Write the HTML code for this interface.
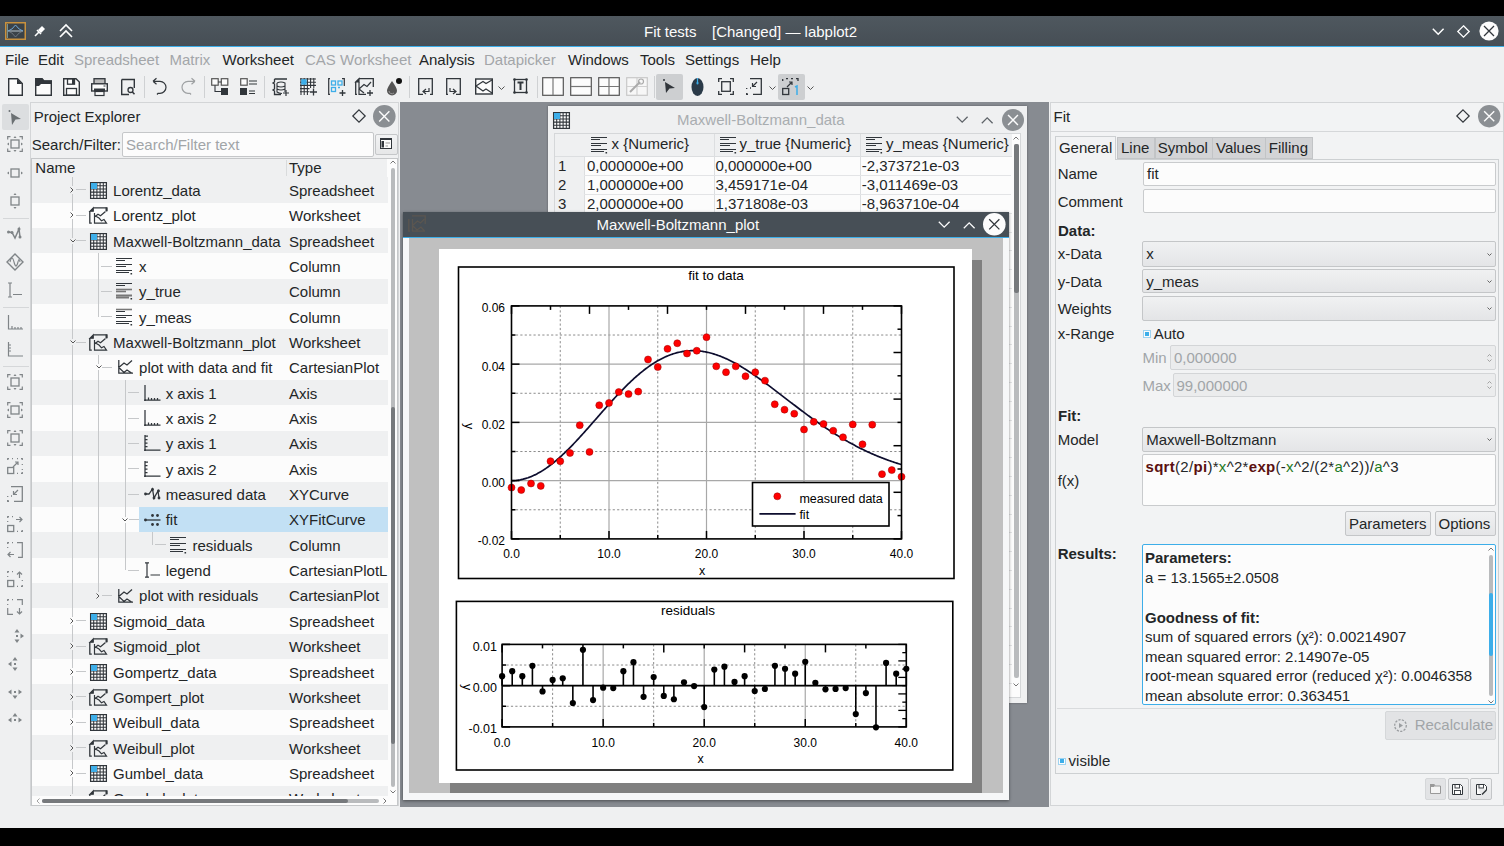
<!DOCTYPE html><html><head><meta charset="utf-8"><style>
html,body{margin:0;padding:0;}
body{width:1504px;height:846px;overflow:hidden;position:relative;background:#eff0f1;font-family:"Liberation Sans", sans-serif;}
.a{position:absolute;}
.t{position:absolute;white-space:pre;line-height:1;}
svg{overflow:visible;}
</style></head><body>
<div class="a" style="left:0px;top:0px;width:1504px;height:16px;background:#000;"></div>
<div class="a" style="left:0px;top:828px;width:1504px;height:18px;background:#000;"></div>
<div class="a" style="left:0px;top:16px;width:1504px;height:30px;background:linear-gradient(#4f585f,#464e55);"></div>
<div class="a" style="left:0px;top:46px;width:1504px;height:1px;background:#3daee9;"></div>
<svg class="a" style="left:5px;top:22px;" width="21" height="18" viewBox="0 0 21 18"><rect x="0.75" y="0.75" width="19.5" height="16.5" fill="#3a4248" stroke="#c9913d" stroke-width="1.5"/>
<path d="M3 9 H18" stroke="#b8c4cc" stroke-width="1"/>
<path d="M3 9 Q7 8 10.5 3 Q14 8 18 9" stroke="#6fa8d8" fill="none" stroke-width="1"/>
<path d="M3 9 Q7 10 10.5 15 Q14 10 18 9" stroke="#78808a" fill="none" stroke-width="0.8"/>
<path d="M2.5 2 V16" stroke="#8aa" stroke-width="0.8"/></svg>
<svg class="a" style="left:34px;top:25px;" width="12" height="12" viewBox="0 0 12 12"><path d="M1 11 L5 7" stroke="#fff" stroke-width="1.6"/><path d="M4 5 L7 8 L11 4 L8 1 Z" fill="#fff"/><path d="M3 5 L7 9" stroke="#fff" stroke-width="1.6"/></svg>
<svg class="a" style="left:59px;top:24px;" width="14" height="14" viewBox="0 0 14 14"><path d="M1 7 L7 1 L13 7 M1 13 L7 7 L13 13" stroke="#fff" stroke-width="1.6" fill="none"/></svg>
<div class="t" style="top:24.00px;font-size:15px;color:#fcfcfc;left:644px;">Fit tests</div>
<div class="t" style="top:24.00px;font-size:15px;color:#fcfcfc;left:712px;">[Changed] — labplot2</div>
<svg class="a" style="left:1432px;top:28px;" width="13" height="8" viewBox="0 0 13 8"><path d="M0.8 0.8 L6.2 6.2 L11.6 0.8" stroke="#fff" stroke-width="1.5" fill="none"/></svg>
<svg class="a" style="left:1457px;top:25px;" width="13" height="13" viewBox="0 0 13 13"><path d="M6.5 0.8 L12.2 6.5 L6.5 12.2 L0.8 6.5 Z" stroke="#fff" stroke-width="1.3" fill="none"/></svg>
<svg class="a" style="left:1479px;top:21px;" width="20" height="20" viewBox="0 0 20 20"><circle cx="10" cy="10" r="9.6" fill="#fcfcfc"/><path d="M5 5 L15 15 M15 5 L5 15" stroke="#31363b" stroke-width="1.3"/></svg>
<div class="t" style="top:51.90px;font-size:15px;color:#232627;left:5px;">File</div>
<div class="t" style="top:51.90px;font-size:15px;color:#232627;left:38px;">Edit</div>
<div class="t" style="top:51.90px;font-size:15px;color:#a3a6a9;left:74px;">Spreadsheet</div>
<div class="t" style="top:51.90px;font-size:15px;color:#a3a6a9;left:169.5px;">Matrix</div>
<div class="t" style="top:51.90px;font-size:15px;color:#232627;left:222.5px;">Worksheet</div>
<div class="t" style="top:51.90px;font-size:15px;color:#a3a6a9;left:305px;">CAS Worksheet</div>
<div class="t" style="top:51.90px;font-size:15px;color:#232627;left:419px;">Analysis</div>
<div class="t" style="top:51.90px;font-size:15px;color:#a3a6a9;left:484px;">Datapicker</div>
<div class="t" style="top:51.90px;font-size:15px;color:#232627;left:568px;">Windows</div>
<div class="t" style="top:51.90px;font-size:15px;color:#232627;left:640px;">Tools</div>
<div class="t" style="top:51.90px;font-size:15px;color:#232627;left:685px;">Settings</div>
<div class="t" style="top:51.90px;font-size:15px;color:#232627;left:750px;">Help</div>
<svg class="a" style="left:8px;top:78px;" width="15" height="18" viewBox="0 0 15 18"><path d="M0.7 0.7 H9.5 L14.3 5.5 V17.3 H0.7 Z" fill="#fcfcfc" stroke="#31363b" stroke-width="1.4"/><path d="M9 0.7 L14.3 6 H9 Z" fill="#31363b"/></svg>
<svg class="a" style="left:35px;top:78px;" width="17" height="18" viewBox="0 0 17 18"><path d="M0.7 17.3 V0.7 H7 L9 3 H16.3 V17.3 Z" fill="#fcfcfc" stroke="#31363b" stroke-width="1.4"/><path d="M0 0 H7 L9 2.5 H17 V6 H6 L4 8 H0 Z" fill="#31363b"/></svg>
<svg class="a" style="left:63px;top:78px;" width="17" height="18" viewBox="0 0 17 18"><path d="M0.7 0.7 H13 L16.3 4 V17.3 H0.7 Z" fill="#fcfcfc" stroke="#31363b" stroke-width="1.4"/><rect x="4.5" y="0.7" width="7" height="5.5" fill="none" stroke="#31363b" stroke-width="1.3"/><rect x="9" y="1" width="2.5" height="5" fill="#31363b"/><rect x="3.5" y="10.5" width="10" height="6.8" fill="none" stroke="#31363b" stroke-width="1.3"/></svg>
<svg class="a" style="left:91px;top:78px;" width="17" height="18" viewBox="0 0 17 18"><rect x="3" y="0.7" width="11" height="5.5" fill="#bbb" stroke="#31363b" stroke-width="1.3"/><rect x="0.7" y="5.8" width="15.6" height="7.2" fill="#fcfcfc" stroke="#31363b" stroke-width="1.4"/><rect x="3" y="10.5" width="11" height="3" fill="#31363b"/><rect x="4" y="13.5" width="9" height="4" fill="#fcfcfc" stroke="#31363b" stroke-width="1.2"/><rect x="12.5" y="7.5" width="2" height="1" fill="#31363b"/></svg>
<svg class="a" style="left:121px;top:78px;" width="14" height="18" viewBox="0 0 14 18"><path d="M0.7 1.5 H13.3 V10 M0.7 1.5 V16.5 H8" fill="none" stroke="#31363b" stroke-width="1.4"/><circle cx="9.5" cy="12" r="2.5" fill="none" stroke="#31363b" stroke-width="1.3"/><path d="M11.2 13.8 L13.5 16.3" stroke="#31363b" stroke-width="1.5"/></svg>
<div class="a" style="left:144px;top:76px;width:1px;height:22px;background:#cfd1d3;"></div>
<svg class="a" style="left:152px;top:78px;" width="16" height="18" viewBox="0 0 16 18"><path d="M1 3.3 L4.5 0.3 M1 3.3 L4.5 6.3 M1 3.3 H8 A6 6 0 0 1 8 15.3 H6 L5 16.5" fill="none" stroke="#31363b" stroke-width="1.2"/></svg>
<svg class="a" style="left:180px;top:78px;" width="16" height="18" viewBox="0 0 16 18"><path d="M15 3.3 L11.5 0.3 M15 3.3 L11.5 6.3 M15 3.3 H8 A6 6 0 0 0 8 15.3 H10 L11 16.5" fill="none" stroke="#9ea1a3" stroke-width="1.2"/></svg>
<div class="a" style="left:204px;top:76px;width:1px;height:22px;background:#cfd1d3;"></div>
<svg class="a" style="left:211px;top:78px;" width="18" height="17" viewBox="0 0 18 17"><rect x="0.7" y="0.7" width="6.5" height="6.5" fill="#fcfcfc" stroke="#555" stroke-width="1.2"/><rect x="10.3" y="0.7" width="6.5" height="6.5" fill="#fcfcfc" stroke="#555" stroke-width="1.2"/><path d="M7.2 4 H10.3 M4 7.2 V13.5 H10" stroke="#31363b" stroke-width="1.1" fill="none"/><rect x="10" y="10" width="7" height="7" fill="#31363b"/></svg>
<svg class="a" style="left:240px;top:78px;" width="17" height="17" viewBox="0 0 17 17"><rect x="0.7" y="0.7" width="6.5" height="6.5" fill="#fcfcfc" stroke="#555" stroke-width="1.2"/><path d="M9 3 H17 M9 6 H17 M9 13 H15 M9 15.5 H15" stroke="#31363b" stroke-width="1.1"/><rect x="0" y="10" width="7" height="7" fill="#31363b"/></svg>
<div class="a" style="left:264px;top:76px;width:1px;height:22px;background:#cfd1d3;"></div>
<svg class="a" style="left:272px;top:78px;" width="18" height="18" viewBox="0 0 18 18"><path d="M2.5 1 H15 M2.5 1 V4 L1 5 L2.5 6 V11 L1 12 L2.5 13 V16.5 H9" fill="none" stroke="#31363b" stroke-width="1.3"/><path d="M5 5 Q9 3 13 5 V14 M5 5 V14 Q7 15.5 10 15.5 M5 8 Q9 10 13 8 M5 11 Q9 13 13 11" fill="none" stroke="#31363b" stroke-width="1.1"/><path d="M14 12 V18 M11 15 H17" stroke="#31363b" stroke-width="1.2"/></svg>
<svg class="a" style="left:300px;top:78px;" width="17" height="18" viewBox="0 0 17 18"><rect x="0.5" y="0.5" width="15" height="15.5" fill="#fcfcfc"/><path d="M1.0 0 V17 M0 1.0 H16" stroke="#31363b" stroke-width="1.1"/><path d="M4.2 0 V17 M0 4.2 H16" stroke="#31363b" stroke-width="1.1"/><path d="M7.4 0 V17 M0 7.4 H16" stroke="#31363b" stroke-width="1.1"/><path d="M10.600000000000001 0 V17 M0 10.600000000000001 H16" stroke="#31363b" stroke-width="1.1"/><path d="M13.8 0 V17 M0 13.8 H16" stroke="#31363b" stroke-width="1.1"/><rect x="1.2" y="1.2" width="5.5" height="5.5" fill="#3daee9"/><rect x="9.5" y="10" width="8" height="8" fill="#eff0f1"/><path d="M13.5 10.5 V17.5 M10 14 H17" stroke="#31363b" stroke-width="1.3"/></svg>
<svg class="a" style="left:328px;top:78px;" width="18" height="18" viewBox="0 0 18 18"><path d="M2 0.7 H0.7 V16.3 H2 M14 0.7 H16.3 V8" fill="none" stroke="#31363b" stroke-width="1.2"/><rect x="3.5" y="3" width="4" height="4" fill="none" stroke="#3daee9" stroke-width="1.3"/><rect x="10" y="3" width="4" height="4" fill="none" stroke="#3daee9" stroke-width="1.3"/><rect x="3.5" y="9.5" width="4" height="4" fill="none" stroke="#3daee9" stroke-width="1.3"/><path d="M10 9.5 H12" stroke="#3daee9" stroke-width="1.3"/><path d="M14.5 12 V18 M11.5 15 H17.5" stroke="#31363b" stroke-width="1.3"/></svg>
<svg class="a" style="left:355px;top:78px;" width="19" height="18" viewBox="0 0 19 18"><path d="M4 0.7 H18.3 V9 M0.7 4 V16.3 H2" fill="none" stroke="#31363b" stroke-width="1.3"/><path d="M0.7 4 L4 0.7 V4 Z" fill="#31363b" stroke="#31363b" stroke-width="1.2"/><path d="M4 4 V16.3 H11 M4 11 L9 6.5 L12 8.5 L16 4" fill="none" stroke="#31363b" stroke-width="1.2"/><path d="M4 11 L9 15" stroke="#31363b" stroke-width="1.2"/><path d="M15 12 V18 M12 15 H18" stroke="#31363b" stroke-width="1.3"/></svg>
<svg class="a" style="left:386px;top:78px;" width="17" height="18" viewBox="0 0 17 18"><path d="M6 3 Q1 10 1 12.5 A5 5 0 0 0 11 12.5 Q11 10 6 3 Z" fill="#555"/><path d="M3 13 A3 3 0 0 0 8 15" stroke="#999" stroke-width="1" fill="none"/><circle cx="13" cy="3" r="3" fill="#111"/></svg>
<div class="a" style="left:409px;top:76px;width:1px;height:22px;background:#cfd1d3;"></div>
<svg class="a" style="left:418px;top:78px;" width="15" height="17" viewBox="0 0 15 17"><path d="M5 16.3 H0.7 V0.7 H14.3 V13 M14.3 13 V16.3 H12" fill="none" stroke="#31363b" stroke-width="1.3"/><path d="M11 10 V13.5 H5.5 M8 11 L5 13.5 L8 16" fill="none" stroke="#31363b" stroke-width="1.2"/></svg>
<svg class="a" style="left:446px;top:78px;" width="15" height="17" viewBox="0 0 15 17"><path d="M10 16.3 H14.3 V0.7 H0.7 V16.3 H2" fill="none" stroke="#31363b" stroke-width="1.3"/><path d="M4 10 V13.5 H9.5 M7 11 L10 13.5 L7 16" fill="none" stroke="#31363b" stroke-width="1.2"/></svg>
<svg class="a" style="left:475px;top:78px;" width="18" height="17" viewBox="0 0 18 17"><rect x="0.7" y="1" width="16.6" height="15" fill="#fcfcfc" stroke="#31363b" stroke-width="1.4"/><path d="M1 8 L8 3.5 L11 5.5 L17 2 M1 8 L8 13 L11 11 L17 15" fill="none" stroke="#31363b" stroke-width="1.2"/></svg>
<svg class="a" style="left:498px;top:86px;" width="7" height="4" viewBox="0 0 7 4"><path d="M0.5 0.5 L3.5 3.5 L6.5 0.5" fill="none" stroke="#555" stroke-width="1"/></svg>
<svg class="a" style="left:513px;top:78px;" width="15" height="17" viewBox="0 0 15 17"><rect x="1.5" y="1.5" width="12" height="13" fill="none" stroke="#31363b" stroke-width="1.3"/><circle cx="1.5" cy="1.5" r="1.3" fill="#31363b"/><circle cx="13.5" cy="1.5" r="1.3" fill="#31363b"/><circle cx="1.5" cy="14.5" r="1.3" fill="#31363b"/><circle cx="13.5" cy="14.5" r="1.3" fill="#31363b"/><path d="M4.5 4.5 H10.5 M7.5 4.5 V12" stroke="#31363b" stroke-width="2"/></svg>
<div class="a" style="left:537px;top:76px;width:1px;height:22px;background:#cfd1d3;"></div>
<svg class="a" style="left:542px;top:77px;" width="22" height="19" viewBox="0 0 22 19"><rect x="0.7" y="0.7" width="20.6" height="17.6" fill="#fcfcfc" stroke="#555" stroke-width="1.2"/><path d="M11 1 V18" stroke="#777" stroke-width="1.2"/></svg>
<svg class="a" style="left:570px;top:77px;" width="22" height="19" viewBox="0 0 22 19"><rect x="0.7" y="0.7" width="20.6" height="17.6" fill="#fcfcfc" stroke="#555" stroke-width="1.2"/><path d="M1 9.5 H21" stroke="#777" stroke-width="1.2"/></svg>
<svg class="a" style="left:598px;top:77px;" width="22" height="19" viewBox="0 0 22 19"><rect x="0.7" y="0.7" width="20.6" height="17.6" fill="#fcfcfc" stroke="#555" stroke-width="1.2"/><path d="M1 9.5 H21 M11 1 V18" stroke="#777" stroke-width="1.2"/></svg>
<svg class="a" style="left:626px;top:77px;" width="22" height="19" viewBox="0 0 22 19"><rect x="0.7" y="0.7" width="20.6" height="17.6" fill="#f7f7f7" stroke="#c8c8c8" stroke-width="1.2"/><path d="M1 9.5 H21 M11 1 V18" stroke="#d0d0d0" stroke-width="1.2"/><path d="M4 15 L14 5" stroke="#aaa" stroke-width="2"/><circle cx="15" cy="4.5" r="2.5" fill="none" stroke="#aaa" stroke-width="1.2"/></svg>
<div class="a" style="left:654px;top:76px;width:1px;height:22px;background:#cfd1d3;"></div>
<div class="a" style="left:656px;top:73.5px;width:27px;height:26.5px;background:#cdcfd1;border-radius:2px;"></div>
<svg class="a" style="left:663px;top:79px;" width="13" height="15" viewBox="0 0 13 15"><path d="M2 3 L12 9 L6.5 9.5 L3 14 Z" fill="#31363b"/><circle cx="1" cy="1" r="1" fill="#31363b"/></svg>
<svg class="a" style="left:691px;top:77px;" width="13" height="20" viewBox="0 0 13 20"><ellipse cx="6.5" cy="10" rx="6" ry="9" fill="#2a3a48"/><path d="M6.5 1 V7" stroke="#3daee9" stroke-width="1.2"/><ellipse cx="6.5" cy="6" rx="1" ry="1.6" fill="#3daee9"/></svg>
<svg class="a" style="left:718px;top:78px;" width="16" height="17" viewBox="0 0 16 17"><path d="M0.7 4 V0.7 H4 M12 0.7 H15.3 V4 M15.3 13 V16.3 H12 M4 16.3 H0.7 V13" fill="none" stroke="#31363b" stroke-width="1.3"/><rect x="3.7" y="3.7" width="8.6" height="9.6" fill="none" stroke="#31363b" stroke-width="1.3"/></svg>
<svg class="a" style="left:746px;top:78px;" width="16" height="17" viewBox="0 0 16 17"><path d="M4 0.7 H15.3 V16.3 H7" fill="none" stroke="#31363b" stroke-width="1.3"/><path d="M0.7 10 V11 M0.7 15 V16.3 H2 M4 10 H5" stroke="#31363b" stroke-width="1.3"/><path d="M11 4 L6.5 8.5 M6.5 5 V8.5 H10" fill="none" stroke="#31363b" stroke-width="1.2"/></svg>
<svg class="a" style="left:769px;top:86px;" width="7" height="4" viewBox="0 0 7 4"><path d="M0.5 0.5 L3.5 3.5 L6.5 0.5" fill="none" stroke="#555" stroke-width="1"/></svg>
<div class="a" style="left:778px;top:73.5px;width:27px;height:26.5px;background:#cdcfd1;border-radius:2px;"></div>
<svg class="a" style="left:782px;top:78px;" width="18" height="18" viewBox="0 0 18 18"><path d="M0.7 3 V1 M4 0.7 H6 M9 0.7 H11 M14 0.7 H16 V3" stroke="#31363b" stroke-width="1.3" fill="none"/><rect x="0.7" y="10.5" width="6" height="6" fill="none" stroke="#31363b" stroke-width="1.3"/><path d="M5 9 L10 4 M7 4 H10 V7" fill="none" stroke="#31363b" stroke-width="1.2"/><path d="M13 9 L15 8 V17" fill="none" stroke="#3daee9" stroke-width="1.5"/></svg>
<svg class="a" style="left:807px;top:86px;" width="7" height="4" viewBox="0 0 7 4"><path d="M0.5 0.5 L3.5 3.5 L6.5 0.5" fill="none" stroke="#555" stroke-width="1"/></svg>
<div class="a" style="left:2px;top:104px;width:27px;height:26px;background:#dcdee0;border-radius:2px;"></div>
<svg class="a" style="left:7px;top:109px;" width="16" height="17" viewBox="0 0 16 17"><path d="M4 4 L14 10 L8.5 10.5 L5 16 Z" fill="#6b7073"/><circle cx="2.5" cy="2" r="1" fill="#6b7073"/></svg>
<svg class="a" style="left:7px;top:136px;" width="16" height="16" viewBox="0 0 16 16"><path d="M0.7 3.5 V0.7 H3.5 M12.5 0.7 H15.3 V3.5 M15.3 12.5 V15.3 H12.5 M3.5 15.3 H0.7 V12.5" fill="none" stroke="#7f8487" stroke-width="1.2"/><rect x="4" y="4" width="8" height="8" fill="none" stroke="#7f8487" stroke-width="1.3"/><path d="M0 8 L2 6.5 V9.5 Z M16 8 L14 6.5 V9.5 Z" fill="#7f8487"/><path d="M8 0 L6.5 2 H9.5 Z M8 16 L6.5 14 H9.5 Z" fill="#7f8487"/></svg>
<svg class="a" style="left:7px;top:165px;" width="16" height="16" viewBox="0 0 16 16"><rect x="4" y="4" width="8" height="8" fill="none" stroke="#7f8487" stroke-width="1.3"/><path d="M0 8 L2 6.5 V9.5 Z M16 8 L14 6.5 V9.5 Z" fill="#7f8487"/></svg>
<svg class="a" style="left:7px;top:193px;" width="16" height="16" viewBox="0 0 16 16"><rect x="4" y="4" width="8" height="8" fill="none" stroke="#7f8487" stroke-width="1.3"/><path d="M8 0 L6.5 2 H9.5 Z M8 16 L6.5 14 H9.5 Z" fill="#7f8487"/></svg>
<div class="a" style="left:3px;top:217.5px;width:26px;height:1px;background:#d5d7d9;"></div>
<svg class="a" style="left:7px;top:226px;" width="16" height="15" viewBox="0 0 16 15"><path d="M1.5 6 L5 6.5 L8 12 L12 3 L13 11" fill="none" stroke="#7f8487" stroke-width="1.5"/><circle cx="1.5" cy="6" r="1.5" fill="#7f8487"/><circle cx="5" cy="6.5" r="1.5" fill="#7f8487"/><circle cx="12" cy="3" r="1.5" fill="#7f8487"/><circle cx="13" cy="11" r="1.5" fill="#7f8487"/></svg>
<svg class="a" style="left:6px;top:253px;" width="18" height="18" viewBox="0 0 18 18"><path d="M9 1 L17 9 L9 17 L1 9 Z" fill="none" stroke="#7f8487" stroke-width="1.4"/><path d="M4 9 Q6 1 8 9 Q10 17 12 9 Q13 4 14 9" fill="none" stroke="#7f8487" stroke-width="1.1"/></svg>
<svg class="a" style="left:7px;top:282px;" width="16" height="16" viewBox="0 0 16 16"><path d="M1 1 H5 M3 1 V15 M1 15 H5 M6 12.5 H15" fill="none" stroke="#7f8487" stroke-width="1.2"/></svg>
<div class="a" style="left:3px;top:306.5px;width:26px;height:1px;background:#d5d7d9;"></div>
<svg class="a" style="left:7px;top:314px;" width="16" height="16" viewBox="0 0 16 16"><path d="M1.5 1 V15 H16 M5 12 V15 M8 13 V15 M11 13 V15 M14 13 V15" fill="none" stroke="#7f8487" stroke-width="1.2"/></svg>
<svg class="a" style="left:7px;top:341px;" width="16" height="16" viewBox="0 0 16 16"><path d="M1.5 1 V15 H16 M1.5 4 H4 M1.5 7 H4 M1.5 10 H4" fill="none" stroke="#7f8487" stroke-width="1.2"/></svg>
<div class="a" style="left:3px;top:366px;width:26px;height:1px;background:#d5d7d9;"></div>
<svg class="a" style="left:7px;top:374px;" width="16" height="16" viewBox="0 0 16 16"><path d="M0.7 3.5 V0.7 H3.5 M12.5 0.7 H15.3 V3.5 M15.3 12.5 V15.3 H12.5 M3.5 15.3 H0.7 V12.5" fill="none" stroke="#7f8487" stroke-width="1.2"/><rect x="4" y="4" width="8" height="8" fill="none" stroke="#7f8487" stroke-width="1.3"/><path d="M8 0 L6.5 2 H9.5 Z M8 16 L6.5 14 H9.5 Z" fill="#7f8487"/></svg>
<svg class="a" style="left:7px;top:402px;" width="16" height="16" viewBox="0 0 16 16"><path d="M0.7 3.5 V0.7 H3.5 M12.5 0.7 H15.3 V3.5 M15.3 12.5 V15.3 H12.5 M3.5 15.3 H0.7 V12.5" fill="none" stroke="#7f8487" stroke-width="1.2"/><rect x="4" y="4" width="8" height="8" fill="none" stroke="#7f8487" stroke-width="1.3"/><path d="M0 8 L2 6.5 V9.5 Z M16 8 L14 6.5 V9.5 Z" fill="#7f8487"/></svg>
<svg class="a" style="left:7px;top:430px;" width="16" height="16" viewBox="0 0 16 16"><path d="M0.7 3.5 V0.7 H3.5 M12.5 0.7 H15.3 V3.5 M15.3 12.5 V15.3 H12.5 M3.5 15.3 H0.7 V12.5" fill="none" stroke="#7f8487" stroke-width="1.2"/><rect x="4" y="4" width="8" height="8" fill="none" stroke="#7f8487" stroke-width="1.3"/><path d="M8 0 L6.5 2 H9.5 Z M8 16 L6.5 14 H9.5 Z" fill="#7f8487"/></svg>
<svg class="a" style="left:7px;top:458px;" width="16" height="16" viewBox="0 0 16 16"><path d="M0.7 2 V0.7 H2 M5 0.7 H6 M10 0.7 H11 M14 0.7 H15.3 V2 M15.3 6 V7 M15.3 11 V12 M15.3 14 V15.3 H14 M10 15.3 H11" stroke="#7f8487" stroke-width="1.2" fill="none"/><rect x="0.7" y="9.5" width="6" height="6" fill="none" stroke="#7f8487" stroke-width="1.3"/><path d="M6 9 L11 4 M8 4 H11 V7" fill="none" stroke="#7f8487" stroke-width="1.2"/></svg>
<svg class="a" style="left:7px;top:486px;" width="16" height="16" viewBox="0 0 16 16"><path d="M4 0.7 H15.3 V15.3 H7" fill="none" stroke="#7f8487" stroke-width="1.3"/><path d="M0.7 10 V11 M0.7 14 V15.3 H2 M4 10 H5" stroke="#7f8487" stroke-width="1.3"/><path d="M11 4 L6.5 8.5 M6.5 5 V8.5 H10" fill="none" stroke="#7f8487" stroke-width="1.2"/></svg>
<svg class="a" style="left:7px;top:516px;" width="16" height="16" viewBox="0 0 16 16"><path d="M0.7 2 V0.7 H2 M5 0.7 H6 M0.7 5 V6 M15.3 14 V15.3 H14 M11 15.3 H10" stroke="#7f8487" stroke-width="1.2" fill="none"/><rect x="0.7" y="9.5" width="6" height="6" fill="none" stroke="#7f8487" stroke-width="1.3"/><path d="M9 3.5 H15 M12.5 1 L15 3.5 L12.5 6" fill="none" stroke="#7f8487" stroke-width="1.2"/></svg>
<svg class="a" style="left:7px;top:542px;" width="16" height="16" viewBox="0 0 16 16"><path d="M0.7 2 V0.7 H2 M5 0.7 H6 M0.7 5 V6 M10 0.7 H15.3 V15.3 H11" stroke="#7f8487" stroke-width="1.2" fill="none"/><path d="M1 12.5 H7 M3.5 10 L1 12.5 L3.5 15" fill="none" stroke="#7f8487" stroke-width="1.2"/></svg>
<svg class="a" style="left:7px;top:571px;" width="16" height="16" viewBox="0 0 16 16"><path d="M0.7 2 V0.7 H2 M5 0.7 H6 M0.7 5 V6 M15.3 9 V10 M15.3 14 V15.3 H14 M11 15.3 H10" stroke="#7f8487" stroke-width="1.2" fill="none"/><rect x="0.7" y="9.5" width="6" height="6" fill="none" stroke="#7f8487" stroke-width="1.3"/><path d="M12.5 1 V7 M10 3.5 L12.5 1 L15 3.5" fill="none" stroke="#7f8487" stroke-width="1.2"/></svg>
<svg class="a" style="left:7px;top:599px;" width="16" height="16" viewBox="0 0 16 16"><path d="M0.7 2 V0.7 H2 M5 0.7 H6 M0.7 5 V6 M10 0.7 H15.3 V6 M0.7 9 V15.3 H6" stroke="#7f8487" stroke-width="1.2" fill="none"/><path d="M12.5 9 V15 M10 12.5 L12.5 15 L15 12.5" fill="none" stroke="#7f8487" stroke-width="1.2"/></svg>
<svg class="a" style="left:9px;top:628px;" width="16" height="16" viewBox="0 0 16 16"><g fill="#7f8487"><path d="M8 1 L5.5 4.5 H10.5 Z"/><path d="M8 15 L5.5 11.5 H10.5 Z"/><path d="M15 8 L11.5 5.5 V10.5 Z"/><rect x="7" y="7" width="2" height="2"/><rect x="7" y="7" width="2" height="2"/></g></svg>
<svg class="a" style="left:7px;top:656px;" width="16" height="16" viewBox="0 0 16 16"><g fill="#7f8487"><path d="M8 1 L5.5 4.5 H10.5 Z"/><path d="M8 15 L5.5 11.5 H10.5 Z"/><path d="M1 8 L4.5 5.5 V10.5 Z"/><rect x="7" y="7" width="2" height="2"/><rect x="7" y="7" width="2" height="2"/></g></svg>
<svg class="a" style="left:7px;top:684px;" width="16" height="16" viewBox="0 0 16 16"><g fill="#7f8487"><path d="M8 15 L5.5 11.5 H10.5 Z"/><path d="M1 8 L4.5 5.5 V10.5 Z"/><path d="M15 8 L11.5 5.5 V10.5 Z"/><rect x="7" y="7" width="2" height="2"/><rect x="7" y="7" width="2" height="2"/></g></svg>
<svg class="a" style="left:7px;top:712px;" width="16" height="16" viewBox="0 0 16 16"><g fill="#7f8487"><path d="M8 1 L5.5 4.5 H10.5 Z"/><path d="M1 8 L4.5 5.5 V10.5 Z"/><path d="M15 8 L11.5 5.5 V10.5 Z"/><rect x="7" y="7" width="2" height="2"/><rect x="7" y="7" width="2" height="2"/></g></svg>
<div class="a" style="left:30px;top:102px;width:369px;height:704px;background:#eff0f1;box-sizing:border-box;border:1px solid #d3d5d7;"></div>
<div class="t" style="top:109.20px;font-size:15px;color:#232627;left:33.7px;">Project Explorer</div>
<svg class="a" style="left:352px;top:109px;" width="14" height="14" viewBox="0 0 14 14"><path d="M7 0.8 L13.2 7 L7 13.2 L0.8 7 Z" fill="none" stroke="#31363b" stroke-width="1.2"/></svg>
<svg class="a" style="left:373px;top:105px;" width="22.6" height="22.6" viewBox="0 0 22.6 22.6"><circle cx="11.3" cy="11.3" r="11.3" fill="#8b8f93"/><path d="M6.215 6.215 L16.385 16.385 M16.385 6.215 L6.215 16.385" stroke="#fcfcfc" stroke-width="1.4"/></svg>
<div class="t" style="top:136.80px;font-size:15px;color:#232627;left:31.7px;">Search/Filter:</div>
<div class="a" style="left:121.5px;top:131.5px;width:252px;height:25px;background:#fcfcfc;box-sizing:border-box;border:1px solid #c5c7c9;border-radius:2px;"></div>
<div class="t" style="top:136.80px;font-size:15px;color:#a1a5a8;left:126px;">Search/Filter text</div>
<div class="a" style="left:375px;top:133.5px;width:23px;height:21.5px;background:linear-gradient(#f2f3f4,#e6e7e8);box-sizing:border-box;border:1px solid #c5c7c9;border-radius:2px;"></div>
<svg class="a" style="left:380px;top:138px;" width="12" height="11" viewBox="0 0 12 11"><rect x="0.5" y="0.5" width="11" height="10" fill="#fcfcfc" stroke="#31363b" stroke-width="1"/><rect x="0" y="0" width="12" height="2" fill="#31363b"/><rect x="1.5" y="3" width="2.5" height="6.5" fill="#31363b"/><path d="M5.5 5 H10 M5.5 8 H8" stroke="#999" stroke-width="1"/></svg>
<div class="a" style="left:31px;top:158px;width:367px;height:648px;background:#fcfcfc;box-sizing:border-box;border:1px solid #c5c7c9;"></div>
<div class="a" style="left:32px;top:159px;width:355px;height:18px;background:#eff0f1;"></div>
<div class="a" style="left:286px;top:160px;width:1px;height:16px;background:#d9dbdc;"></div>
<div class="t" style="top:160.20px;font-size:15px;color:#232627;left:35.3px;">Name</div>
<div class="t" style="top:160.20px;font-size:15px;color:#232627;left:289px;">Type</div>
<div class="a" style="left:32px;top:177px;width:356px;height:619px;overflow:hidden;">
<div class="a" style="left:0;top:0.30px;width:356px;height:25.35px;background:#eff0f1;"></div>
<div class="a" style="left:0;top:51.00px;width:356px;height:25.35px;background:#eff0f1;"></div>
<div class="a" style="left:0;top:101.70px;width:356px;height:25.35px;background:#eff0f1;"></div>
<div class="a" style="left:0;top:152.40px;width:356px;height:25.35px;background:#eff0f1;"></div>
<div class="a" style="left:0;top:203.10px;width:356px;height:25.35px;background:#eff0f1;"></div>
<div class="a" style="left:0;top:253.80px;width:356px;height:25.35px;background:#eff0f1;"></div>
<div class="a" style="left:0;top:304.50px;width:356px;height:25.35px;background:#eff0f1;"></div>
<div class="a" style="left:0;top:355.20px;width:356px;height:25.35px;background:#eff0f1;"></div>
<div class="a" style="left:0;top:405.90px;width:356px;height:25.35px;background:#eff0f1;"></div>
<div class="a" style="left:0;top:456.60px;width:356px;height:25.35px;background:#eff0f1;"></div>
<div class="a" style="left:0;top:507.30px;width:356px;height:25.35px;background:#eff0f1;"></div>
<div class="a" style="left:0;top:558.00px;width:356px;height:25.35px;background:#eff0f1;"></div>
<div class="a" style="left:0;top:608.70px;width:356px;height:25.35px;background:#eff0f1;"></div>
</div>
<div class="a" style="left:139px;top:507.2px;width:249px;height:25.1px;background:#c2e0f4;"></div>
<div class="a" style="left:72.0px;top:177px;width:1px;height:619px;background:#c6c8ca;"></div>
<div class="a" style="left:98.0px;top:253.375px;width:1px;height:63.35000000000002px;background:#c6c8ca;"></div>
<div class="a" style="left:98.0px;top:354.77500000000003px;width:1px;height:240.8px;background:#c6c8ca;"></div>
<div class="a" style="left:125.0px;top:380.125px;width:1px;height:190.0999999999999px;background:#c6c8ca;"></div>
<div class="a" style="left:152.0px;top:532.225px;width:1px;height:12.649999999999977px;background:#c6c8ca;"></div>
<div class="a" style="left:0;top:0;width:1504px;height:846px;clip-path:inset(177px 1116px 50px 32px);">
<div class="a" style="left:75.0px;top:189.47500000000002px;width:10.5px;height:1px;background:#c6c8ca;"></div>
<div class="a" style="left:69.5px;top:185.97500000000002px;width:6px;height:8px;background:#eff0f1;"></div>
<svg class="a" style="left:70px;top:187px;" width="4" height="6" viewBox="0 0 4 6"><path d="M0.5 0.5 L3 3 L0.5 5.5" fill="none" stroke="#555" stroke-width="1"/></svg>
<svg class="a" style="left:90px;top:182px;" width="17" height="17" viewBox="0 0 17 17"><rect x="0" y="0" width="17" height="17" fill="#fcfcfc"/><path d="M0.5 0 V17 M0 0.5 H17" stroke="#31363b" stroke-width="1.05"/><path d="M3.7 0 V17 M0 3.7 H17" stroke="#31363b" stroke-width="1.05"/><path d="M6.9 0 V17 M0 6.9 H17" stroke="#31363b" stroke-width="1.05"/><path d="M10.1 0 V17 M0 10.1 H17" stroke="#31363b" stroke-width="1.05"/><path d="M13.3 0 V17 M0 13.3 H17" stroke="#31363b" stroke-width="1.05"/><path d="M16.5 0 V17 M0 16.5 H17" stroke="#31363b" stroke-width="1.05"/><rect x="0.6" y="0.6" width="15.8" height="15.8" fill="none" stroke="#31363b" stroke-width="1.2"/><rect x="1" y="1" width="6" height="6" fill="#3daee9"/></svg>
<div class="t" style="top:182.88px;font-size:15px;color:#232627;left:113.1px;">Lorentz_data</div>
<div class="t" style="top:182.88px;font-size:15px;color:#232627;left:289px;">Spreadsheet</div>
<div class="a" style="left:75.0px;top:214.82500000000002px;width:10.5px;height:1px;background:#c6c8ca;"></div>
<div class="a" style="left:69.5px;top:211.32500000000002px;width:6px;height:8px;background:#fcfcfc;"></div>
<svg class="a" style="left:70px;top:212px;" width="4" height="6" viewBox="0 0 4 6"><path d="M0.5 0.5 L3 3 L0.5 5.5" fill="none" stroke="#555" stroke-width="1"/></svg>
<svg class="a" style="left:89px;top:207px;" width="19" height="17" viewBox="0 0 19 17"><path d="M4.5 0.8 H17.7 V4.5" fill="none" stroke="#31363b" stroke-width="1.3"/><rect x="16.5" y="0.5" width="2" height="3.5" fill="#31363b"/><path d="M0.8 4.3 L4.3 0.8 V4.3 Z" fill="#31363b" stroke="#31363b" stroke-width="1.1"/><path d="M0.8 4 V16.2 H2.8" fill="none" stroke="#31363b" stroke-width="1.3"/><path d="M5.5 6 V16.2 H17.5 L15 12.5 L12.5 13.8 L10 11 L5.5 8.5 M5.5 10 L9 7.3 L11.5 8.8 L16.5 4.5" fill="none" stroke="#31363b" stroke-width="1.2"/></svg>
<div class="t" style="top:208.23px;font-size:15px;color:#232627;left:113.1px;">Lorentz_plot</div>
<div class="t" style="top:208.23px;font-size:15px;color:#232627;left:289px;">Worksheet</div>
<div class="a" style="left:75.0px;top:240.175px;width:10.5px;height:1px;background:#c6c8ca;"></div>
<div class="a" style="left:69.0px;top:237.675px;width:7px;height:6px;background:#eff0f1;"></div>
<svg class="a" style="left:70px;top:239px;" width="6" height="4" viewBox="0 0 6 4"><path d="M0.5 0.5 L3 3 L5.5 0.5" fill="none" stroke="#555" stroke-width="1"/></svg>
<svg class="a" style="left:90px;top:233px;" width="17" height="17" viewBox="0 0 17 17"><rect x="0" y="0" width="17" height="17" fill="#fcfcfc"/><path d="M0.5 0 V17 M0 0.5 H17" stroke="#31363b" stroke-width="1.05"/><path d="M3.7 0 V17 M0 3.7 H17" stroke="#31363b" stroke-width="1.05"/><path d="M6.9 0 V17 M0 6.9 H17" stroke="#31363b" stroke-width="1.05"/><path d="M10.1 0 V17 M0 10.1 H17" stroke="#31363b" stroke-width="1.05"/><path d="M13.3 0 V17 M0 13.3 H17" stroke="#31363b" stroke-width="1.05"/><path d="M16.5 0 V17 M0 16.5 H17" stroke="#31363b" stroke-width="1.05"/><rect x="0.6" y="0.6" width="15.8" height="15.8" fill="none" stroke="#31363b" stroke-width="1.2"/><rect x="1" y="1" width="6" height="6" fill="#3daee9"/></svg>
<div class="t" style="top:233.58px;font-size:15px;color:#232627;left:113.1px;">Maxwell-Boltzmann_data</div>
<div class="t" style="top:233.58px;font-size:15px;color:#232627;left:289px;">Spreadsheet</div>
<div class="a" style="left:101.0px;top:265.52500000000003px;width:10.5px;height:1px;background:#c6c8ca;"></div>
<svg class="a" style="left:116px;top:258px;" width="17" height="17" viewBox="0 0 17 17"><path d="M0 0.5 H16" stroke="#31363b" stroke-width="1"/><path d="M0 2.5 H9" stroke="#31363b" stroke-width="1"/><path d="M0 6.5 H16" stroke="#31363b" stroke-width="1"/><path d="M0 8.5 H10" stroke="#31363b" stroke-width="1"/><path d="M0 12.5 H16" stroke="#31363b" stroke-width="1"/><path d="M0 14.5 H13" stroke="#31363b" stroke-width="1"/><rect x="14.5" y="15" width="1.6" height="1.5" fill="#31363b"/></svg>
<div class="t" style="top:258.93px;font-size:15px;color:#232627;left:139.1px;">x</div>
<div class="t" style="top:258.93px;font-size:15px;color:#232627;left:289px;">Column</div>
<div class="a" style="left:101.0px;top:290.87500000000006px;width:10.5px;height:1px;background:#c6c8ca;"></div>
<svg class="a" style="left:116px;top:283px;" width="17" height="17" viewBox="0 0 17 17"><path d="M0 0.5 H16" stroke="#31363b" stroke-width="1"/><path d="M0 2.5 H9" stroke="#31363b" stroke-width="1"/><path d="M0 6.5 H16" stroke="#777" stroke-width="1.6"/><path d="M0 8.5 H10" stroke="#777" stroke-width="1.6"/><path d="M0 12.5 H16" stroke="#777" stroke-width="2"/><path d="M0 14.5 H13" stroke="#777" stroke-width="2"/><rect x="14.5" y="15" width="1.6" height="1.5" fill="#31363b"/></svg>
<div class="t" style="top:284.28px;font-size:15px;color:#232627;left:139.1px;">y_true</div>
<div class="t" style="top:284.28px;font-size:15px;color:#232627;left:289px;">Column</div>
<div class="a" style="left:101.0px;top:316.225px;width:10.5px;height:1px;background:#c6c8ca;"></div>
<svg class="a" style="left:116px;top:309px;" width="17" height="17" viewBox="0 0 17 17"><path d="M0 0.5 H16" stroke="#777" stroke-width="1.6"/><path d="M0 2.5 H9" stroke="#31363b" stroke-width="1"/><path d="M0 6.5 H16" stroke="#31363b" stroke-width="1"/><path d="M0 8.5 H10" stroke="#31363b" stroke-width="1"/><path d="M0 12.5 H16" stroke="#31363b" stroke-width="1"/><path d="M0 14.5 H13" stroke="#31363b" stroke-width="1"/><rect x="14.5" y="15" width="1.6" height="1.5" fill="#31363b"/></svg>
<div class="t" style="top:309.63px;font-size:15px;color:#232627;left:139.1px;">y_meas</div>
<div class="t" style="top:309.63px;font-size:15px;color:#232627;left:289px;">Column</div>
<div class="a" style="left:75.0px;top:341.57500000000005px;width:10.5px;height:1px;background:#c6c8ca;"></div>
<div class="a" style="left:69.0px;top:339.07500000000005px;width:7px;height:6px;background:#eff0f1;"></div>
<svg class="a" style="left:70px;top:340px;" width="6" height="4" viewBox="0 0 6 4"><path d="M0.5 0.5 L3 3 L5.5 0.5" fill="none" stroke="#555" stroke-width="1"/></svg>
<svg class="a" style="left:89px;top:334px;" width="19" height="17" viewBox="0 0 19 17"><path d="M4.5 0.8 H17.7 V4.5" fill="none" stroke="#31363b" stroke-width="1.3"/><rect x="16.5" y="0.5" width="2" height="3.5" fill="#31363b"/><path d="M0.8 4.3 L4.3 0.8 V4.3 Z" fill="#31363b" stroke="#31363b" stroke-width="1.1"/><path d="M0.8 4 V16.2 H2.8" fill="none" stroke="#31363b" stroke-width="1.3"/><path d="M5.5 6 V16.2 H17.5 L15 12.5 L12.5 13.8 L10 11 L5.5 8.5 M5.5 10 L9 7.3 L11.5 8.8 L16.5 4.5" fill="none" stroke="#31363b" stroke-width="1.2"/></svg>
<div class="t" style="top:334.98px;font-size:15px;color:#232627;left:113.1px;">Maxwell-Boltzmann_plot</div>
<div class="t" style="top:334.98px;font-size:15px;color:#232627;left:289px;">Worksheet</div>
<div class="a" style="left:101.0px;top:366.925px;width:10.5px;height:1px;background:#c6c8ca;"></div>
<div class="a" style="left:95.0px;top:364.425px;width:7px;height:6px;background:#fcfcfc;"></div>
<svg class="a" style="left:96px;top:365px;" width="6" height="4" viewBox="0 0 6 4"><path d="M0.5 0.5 L3 3 L5.5 0.5" fill="none" stroke="#555" stroke-width="1"/></svg>
<svg class="a" style="left:118px;top:360px;" width="15" height="14" viewBox="0 0 15 14"><path d="M0.8 0 V13.2 H15 M0.8 7.5 L6 3 L9 5 L14 0.5 M0.8 7.5 L6 12.5 L9 10 L14 13.2" fill="none" stroke="#31363b" stroke-width="1.25"/></svg>
<div class="t" style="top:360.33px;font-size:15px;color:#232627;left:139.1px;">plot with data and fit</div>
<div class="t" style="top:360.33px;font-size:15px;color:#232627;left:289px;">CartesianPlot</div>
<div class="a" style="left:128.0px;top:392.27500000000003px;width:10.5px;height:1px;background:#c6c8ca;"></div>
<svg class="a" style="left:144px;top:385px;" width="17" height="16" viewBox="0 0 17 16"><path d="M1 0 V15.2 H16.5 M4.5 12.5 V15 M7.5 13 V15 M10.5 13 V15 M13.5 13 V15" fill="none" stroke="#31363b" stroke-width="1.25"/><circle cx="1" cy="15.2" r="0.9" fill="#31363b"/></svg>
<div class="t" style="top:385.68px;font-size:15px;color:#232627;left:165.7px;">x axis 1</div>
<div class="t" style="top:385.68px;font-size:15px;color:#232627;left:289px;">Axis</div>
<div class="a" style="left:128.0px;top:417.62500000000006px;width:10.5px;height:1px;background:#c6c8ca;"></div>
<svg class="a" style="left:144px;top:410px;" width="17" height="16" viewBox="0 0 17 16"><path d="M1 0 V15.2 H16.5 M4.5 12.5 V15 M7.5 13 V15 M10.5 13 V15 M13.5 13 V15" fill="none" stroke="#31363b" stroke-width="1.25"/><circle cx="1" cy="15.2" r="0.9" fill="#31363b"/></svg>
<div class="t" style="top:411.03px;font-size:15px;color:#232627;left:165.7px;">x axis 2</div>
<div class="t" style="top:411.03px;font-size:15px;color:#232627;left:289px;">Axis</div>
<div class="a" style="left:128.0px;top:442.975px;width:10.5px;height:1px;background:#c6c8ca;"></div>
<svg class="a" style="left:144px;top:435px;" width="17" height="16" viewBox="0 0 17 16"><path d="M1 0 V15.2 H16.5 M1 1 H4 M1 4.5 H3.5 M1 8 H3.5 M1 11.5 H3.5" fill="none" stroke="#31363b" stroke-width="1.25"/><circle cx="1" cy="15.2" r="0.9" fill="#31363b"/></svg>
<div class="t" style="top:436.38px;font-size:15px;color:#232627;left:165.7px;">y axis 1</div>
<div class="t" style="top:436.38px;font-size:15px;color:#232627;left:289px;">Axis</div>
<div class="a" style="left:128.0px;top:468.32500000000005px;width:10.5px;height:1px;background:#c6c8ca;"></div>
<svg class="a" style="left:144px;top:461px;" width="17" height="16" viewBox="0 0 17 16"><path d="M1 0 V15.2 H16.5 M1 1 H4 M1 4.5 H3.5 M1 8 H3.5 M1 11.5 H3.5" fill="none" stroke="#31363b" stroke-width="1.25"/><circle cx="1" cy="15.2" r="0.9" fill="#31363b"/></svg>
<div class="t" style="top:461.73px;font-size:15px;color:#232627;left:165.7px;">y axis 2</div>
<div class="t" style="top:461.73px;font-size:15px;color:#232627;left:289px;">Axis</div>
<div class="a" style="left:128.0px;top:493.67500000000007px;width:10.5px;height:1px;background:#c6c8ca;"></div>
<svg class="a" style="left:144px;top:487px;" width="17" height="14" viewBox="0 0 17 14"><path d="M1.5 7 L5 7 L8.5 2 L10 11 L14 4 L15 11" fill="none" stroke="#31363b" stroke-width="1.3"/><circle cx="1.5" cy="7" r="1.4" fill="#31363b"/><circle cx="8.5" cy="2.5" r="1.4" fill="#31363b"/><circle cx="10" cy="11" r="1.4" fill="#31363b"/><circle cx="14.5" cy="4" r="1.4" fill="#31363b"/><circle cx="15" cy="11" r="1.4" fill="#31363b"/></svg>
<div class="t" style="top:487.08px;font-size:15px;color:#232627;left:165.7px;">measured data</div>
<div class="t" style="top:487.08px;font-size:15px;color:#232627;left:289px;">XYCurve</div>
<div class="a" style="left:128.0px;top:519.025px;width:10.5px;height:1px;background:#c6c8ca;"></div>
<div class="a" style="left:122.0px;top:516.525px;width:7px;height:6px;background:#fcfcfc;"></div>
<svg class="a" style="left:122px;top:518px;" width="6" height="4" viewBox="0 0 6 4"><path d="M0.5 0.5 L3 3 L5.5 0.5" fill="none" stroke="#555" stroke-width="1"/></svg>
<svg class="a" style="left:144px;top:513px;" width="17" height="14" viewBox="0 0 17 14"><path d="M0.5 7 H16.5" stroke="#31363b" stroke-width="1.3"/><circle cx="1.5" cy="7" r="1.4" fill="#31363b"/><circle cx="8.5" cy="2.5" r="1.4" fill="#31363b"/><circle cx="13.5" cy="2.5" r="1.4" fill="#31363b"/><circle cx="8.5" cy="11.5" r="1.4" fill="#31363b"/><circle cx="13.5" cy="11.5" r="1.4" fill="#31363b"/></svg>
<div class="t" style="top:512.43px;font-size:15px;color:#232627;left:165.7px;">fit</div>
<div class="t" style="top:512.43px;font-size:15px;color:#232627;left:289px;">XYFitCurve</div>
<div class="a" style="left:155.0px;top:544.375px;width:10.5px;height:1px;background:#c6c8ca;"></div>
<svg class="a" style="left:170px;top:537px;" width="17" height="17" viewBox="0 0 17 17"><path d="M0 0.5 H16" stroke="#31363b" stroke-width="1"/><path d="M0 2.5 H9" stroke="#31363b" stroke-width="1"/><path d="M0 6.5 H16" stroke="#31363b" stroke-width="1"/><path d="M0 8.5 H10" stroke="#31363b" stroke-width="1"/><path d="M0 12.5 H16" stroke="#31363b" stroke-width="1"/><path d="M0 14.5 H13" stroke="#31363b" stroke-width="1"/><rect x="14.5" y="15" width="1.6" height="1.5" fill="#31363b"/></svg>
<div class="t" style="top:537.78px;font-size:15px;color:#232627;left:192.5px;">residuals</div>
<div class="t" style="top:537.78px;font-size:15px;color:#232627;left:289px;">Column</div>
<div class="a" style="left:128.0px;top:569.7249999999999px;width:10.5px;height:1px;background:#c6c8ca;"></div>
<svg class="a" style="left:144px;top:562px;" width="17" height="16" viewBox="0 0 17 16"><path d="M1 0.8 H5 M3 0.8 V15.2 M1 15.2 H5 M6.5 13 H16" fill="none" stroke="#31363b" stroke-width="1.2"/></svg>
<div class="t" style="top:563.13px;font-size:15px;color:#232627;left:165.7px;">legend</div>
<div class="t" style="top:563.13px;font-size:15px;color:#232627;left:289px;">CartesianPlotL</div>
<div class="a" style="left:101.0px;top:595.075px;width:10.5px;height:1px;background:#c6c8ca;"></div>
<div class="a" style="left:95.5px;top:591.575px;width:6px;height:8px;background:#eff0f1;"></div>
<svg class="a" style="left:96px;top:593px;" width="4" height="6" viewBox="0 0 4 6"><path d="M0.5 0.5 L3 3 L0.5 5.5" fill="none" stroke="#555" stroke-width="1"/></svg>
<svg class="a" style="left:118px;top:589px;" width="15" height="14" viewBox="0 0 15 14"><path d="M0.8 0 V13.2 H15 M0.8 7.5 L6 3 L9 5 L14 0.5 M0.8 7.5 L6 12.5 L9 10 L14 13.2" fill="none" stroke="#31363b" stroke-width="1.25"/></svg>
<div class="t" style="top:588.48px;font-size:15px;color:#232627;left:139.1px;">plot with residuals</div>
<div class="t" style="top:588.48px;font-size:15px;color:#232627;left:289px;">CartesianPlot</div>
<div class="a" style="left:75.0px;top:620.425px;width:10.5px;height:1px;background:#c6c8ca;"></div>
<div class="a" style="left:69.5px;top:616.925px;width:6px;height:8px;background:#fcfcfc;"></div>
<svg class="a" style="left:70px;top:618px;" width="4" height="6" viewBox="0 0 4 6"><path d="M0.5 0.5 L3 3 L0.5 5.5" fill="none" stroke="#555" stroke-width="1"/></svg>
<svg class="a" style="left:90px;top:613px;" width="17" height="17" viewBox="0 0 17 17"><rect x="0" y="0" width="17" height="17" fill="#fcfcfc"/><path d="M0.5 0 V17 M0 0.5 H17" stroke="#31363b" stroke-width="1.05"/><path d="M3.7 0 V17 M0 3.7 H17" stroke="#31363b" stroke-width="1.05"/><path d="M6.9 0 V17 M0 6.9 H17" stroke="#31363b" stroke-width="1.05"/><path d="M10.1 0 V17 M0 10.1 H17" stroke="#31363b" stroke-width="1.05"/><path d="M13.3 0 V17 M0 13.3 H17" stroke="#31363b" stroke-width="1.05"/><path d="M16.5 0 V17 M0 16.5 H17" stroke="#31363b" stroke-width="1.05"/><rect x="0.6" y="0.6" width="15.8" height="15.8" fill="none" stroke="#31363b" stroke-width="1.2"/><rect x="1" y="1" width="6" height="6" fill="#3daee9"/></svg>
<div class="t" style="top:613.83px;font-size:15px;color:#232627;left:113.1px;">Sigmoid_data</div>
<div class="t" style="top:613.83px;font-size:15px;color:#232627;left:289px;">Spreadsheet</div>
<div class="a" style="left:75.0px;top:645.775px;width:10.5px;height:1px;background:#c6c8ca;"></div>
<div class="a" style="left:69.5px;top:642.275px;width:6px;height:8px;background:#eff0f1;"></div>
<svg class="a" style="left:70px;top:643px;" width="4" height="6" viewBox="0 0 4 6"><path d="M0.5 0.5 L3 3 L0.5 5.5" fill="none" stroke="#555" stroke-width="1"/></svg>
<svg class="a" style="left:89px;top:638px;" width="19" height="17" viewBox="0 0 19 17"><path d="M4.5 0.8 H17.7 V4.5" fill="none" stroke="#31363b" stroke-width="1.3"/><rect x="16.5" y="0.5" width="2" height="3.5" fill="#31363b"/><path d="M0.8 4.3 L4.3 0.8 V4.3 Z" fill="#31363b" stroke="#31363b" stroke-width="1.1"/><path d="M0.8 4 V16.2 H2.8" fill="none" stroke="#31363b" stroke-width="1.3"/><path d="M5.5 6 V16.2 H17.5 L15 12.5 L12.5 13.8 L10 11 L5.5 8.5 M5.5 10 L9 7.3 L11.5 8.8 L16.5 4.5" fill="none" stroke="#31363b" stroke-width="1.2"/></svg>
<div class="t" style="top:639.18px;font-size:15px;color:#232627;left:113.1px;">Sigmoid_plot</div>
<div class="t" style="top:639.18px;font-size:15px;color:#232627;left:289px;">Worksheet</div>
<div class="a" style="left:75.0px;top:671.125px;width:10.5px;height:1px;background:#c6c8ca;"></div>
<div class="a" style="left:69.5px;top:667.625px;width:6px;height:8px;background:#fcfcfc;"></div>
<svg class="a" style="left:70px;top:669px;" width="4" height="6" viewBox="0 0 4 6"><path d="M0.5 0.5 L3 3 L0.5 5.5" fill="none" stroke="#555" stroke-width="1"/></svg>
<svg class="a" style="left:90px;top:664px;" width="17" height="17" viewBox="0 0 17 17"><rect x="0" y="0" width="17" height="17" fill="#fcfcfc"/><path d="M0.5 0 V17 M0 0.5 H17" stroke="#31363b" stroke-width="1.05"/><path d="M3.7 0 V17 M0 3.7 H17" stroke="#31363b" stroke-width="1.05"/><path d="M6.9 0 V17 M0 6.9 H17" stroke="#31363b" stroke-width="1.05"/><path d="M10.1 0 V17 M0 10.1 H17" stroke="#31363b" stroke-width="1.05"/><path d="M13.3 0 V17 M0 13.3 H17" stroke="#31363b" stroke-width="1.05"/><path d="M16.5 0 V17 M0 16.5 H17" stroke="#31363b" stroke-width="1.05"/><rect x="0.6" y="0.6" width="15.8" height="15.8" fill="none" stroke="#31363b" stroke-width="1.2"/><rect x="1" y="1" width="6" height="6" fill="#3daee9"/></svg>
<div class="t" style="top:664.53px;font-size:15px;color:#232627;left:113.1px;">Gompertz_data</div>
<div class="t" style="top:664.53px;font-size:15px;color:#232627;left:289px;">Spreadsheet</div>
<div class="a" style="left:75.0px;top:696.4749999999999px;width:10.5px;height:1px;background:#c6c8ca;"></div>
<div class="a" style="left:69.5px;top:692.9749999999999px;width:6px;height:8px;background:#eff0f1;"></div>
<svg class="a" style="left:70px;top:694px;" width="4" height="6" viewBox="0 0 4 6"><path d="M0.5 0.5 L3 3 L0.5 5.5" fill="none" stroke="#555" stroke-width="1"/></svg>
<svg class="a" style="left:89px;top:689px;" width="19" height="17" viewBox="0 0 19 17"><path d="M4.5 0.8 H17.7 V4.5" fill="none" stroke="#31363b" stroke-width="1.3"/><rect x="16.5" y="0.5" width="2" height="3.5" fill="#31363b"/><path d="M0.8 4.3 L4.3 0.8 V4.3 Z" fill="#31363b" stroke="#31363b" stroke-width="1.1"/><path d="M0.8 4 V16.2 H2.8" fill="none" stroke="#31363b" stroke-width="1.3"/><path d="M5.5 6 V16.2 H17.5 L15 12.5 L12.5 13.8 L10 11 L5.5 8.5 M5.5 10 L9 7.3 L11.5 8.8 L16.5 4.5" fill="none" stroke="#31363b" stroke-width="1.2"/></svg>
<div class="t" style="top:689.88px;font-size:15px;color:#232627;left:113.1px;">Gompert_plot</div>
<div class="t" style="top:689.88px;font-size:15px;color:#232627;left:289px;">Worksheet</div>
<div class="a" style="left:75.0px;top:721.825px;width:10.5px;height:1px;background:#c6c8ca;"></div>
<div class="a" style="left:69.5px;top:718.325px;width:6px;height:8px;background:#fcfcfc;"></div>
<svg class="a" style="left:70px;top:719px;" width="4" height="6" viewBox="0 0 4 6"><path d="M0.5 0.5 L3 3 L0.5 5.5" fill="none" stroke="#555" stroke-width="1"/></svg>
<svg class="a" style="left:90px;top:714px;" width="17" height="17" viewBox="0 0 17 17"><rect x="0" y="0" width="17" height="17" fill="#fcfcfc"/><path d="M0.5 0 V17 M0 0.5 H17" stroke="#31363b" stroke-width="1.05"/><path d="M3.7 0 V17 M0 3.7 H17" stroke="#31363b" stroke-width="1.05"/><path d="M6.9 0 V17 M0 6.9 H17" stroke="#31363b" stroke-width="1.05"/><path d="M10.1 0 V17 M0 10.1 H17" stroke="#31363b" stroke-width="1.05"/><path d="M13.3 0 V17 M0 13.3 H17" stroke="#31363b" stroke-width="1.05"/><path d="M16.5 0 V17 M0 16.5 H17" stroke="#31363b" stroke-width="1.05"/><rect x="0.6" y="0.6" width="15.8" height="15.8" fill="none" stroke="#31363b" stroke-width="1.2"/><rect x="1" y="1" width="6" height="6" fill="#3daee9"/></svg>
<div class="t" style="top:715.23px;font-size:15px;color:#232627;left:113.1px;">Weibull_data</div>
<div class="t" style="top:715.23px;font-size:15px;color:#232627;left:289px;">Spreadsheet</div>
<div class="a" style="left:75.0px;top:747.175px;width:10.5px;height:1px;background:#c6c8ca;"></div>
<div class="a" style="left:69.5px;top:743.675px;width:6px;height:8px;background:#eff0f1;"></div>
<svg class="a" style="left:70px;top:745px;" width="4" height="6" viewBox="0 0 4 6"><path d="M0.5 0.5 L3 3 L0.5 5.5" fill="none" stroke="#555" stroke-width="1"/></svg>
<svg class="a" style="left:89px;top:740px;" width="19" height="17" viewBox="0 0 19 17"><path d="M4.5 0.8 H17.7 V4.5" fill="none" stroke="#31363b" stroke-width="1.3"/><rect x="16.5" y="0.5" width="2" height="3.5" fill="#31363b"/><path d="M0.8 4.3 L4.3 0.8 V4.3 Z" fill="#31363b" stroke="#31363b" stroke-width="1.1"/><path d="M0.8 4 V16.2 H2.8" fill="none" stroke="#31363b" stroke-width="1.3"/><path d="M5.5 6 V16.2 H17.5 L15 12.5 L12.5 13.8 L10 11 L5.5 8.5 M5.5 10 L9 7.3 L11.5 8.8 L16.5 4.5" fill="none" stroke="#31363b" stroke-width="1.2"/></svg>
<div class="t" style="top:740.58px;font-size:15px;color:#232627;left:113.1px;">Weibull_plot</div>
<div class="t" style="top:740.58px;font-size:15px;color:#232627;left:289px;">Worksheet</div>
<div class="a" style="left:75.0px;top:772.5250000000001px;width:10.5px;height:1px;background:#c6c8ca;"></div>
<div class="a" style="left:69.5px;top:769.0250000000001px;width:6px;height:8px;background:#fcfcfc;"></div>
<svg class="a" style="left:70px;top:770px;" width="4" height="6" viewBox="0 0 4 6"><path d="M0.5 0.5 L3 3 L0.5 5.5" fill="none" stroke="#555" stroke-width="1"/></svg>
<svg class="a" style="left:90px;top:765px;" width="17" height="17" viewBox="0 0 17 17"><rect x="0" y="0" width="17" height="17" fill="#fcfcfc"/><path d="M0.5 0 V17 M0 0.5 H17" stroke="#31363b" stroke-width="1.05"/><path d="M3.7 0 V17 M0 3.7 H17" stroke="#31363b" stroke-width="1.05"/><path d="M6.9 0 V17 M0 6.9 H17" stroke="#31363b" stroke-width="1.05"/><path d="M10.1 0 V17 M0 10.1 H17" stroke="#31363b" stroke-width="1.05"/><path d="M13.3 0 V17 M0 13.3 H17" stroke="#31363b" stroke-width="1.05"/><path d="M16.5 0 V17 M0 16.5 H17" stroke="#31363b" stroke-width="1.05"/><rect x="0.6" y="0.6" width="15.8" height="15.8" fill="none" stroke="#31363b" stroke-width="1.2"/><rect x="1" y="1" width="6" height="6" fill="#3daee9"/></svg>
<div class="t" style="top:765.93px;font-size:15px;color:#232627;left:113.1px;">Gumbel_data</div>
<div class="t" style="top:765.93px;font-size:15px;color:#232627;left:289px;">Spreadsheet</div>
<div class="a" style="left:75.0px;top:797.875px;width:10.5px;height:1px;background:#c6c8ca;"></div>
<div class="a" style="left:69.5px;top:794.375px;width:6px;height:8px;background:#eff0f1;"></div>
<svg class="a" style="left:70px;top:795px;" width="4" height="6" viewBox="0 0 4 6"><path d="M0.5 0.5 L3 3 L0.5 5.5" fill="none" stroke="#555" stroke-width="1"/></svg>
<svg class="a" style="left:89px;top:790px;" width="19" height="17" viewBox="0 0 19 17"><path d="M4.5 0.8 H17.7 V4.5" fill="none" stroke="#31363b" stroke-width="1.3"/><rect x="16.5" y="0.5" width="2" height="3.5" fill="#31363b"/><path d="M0.8 4.3 L4.3 0.8 V4.3 Z" fill="#31363b" stroke="#31363b" stroke-width="1.1"/><path d="M0.8 4 V16.2 H2.8" fill="none" stroke="#31363b" stroke-width="1.3"/><path d="M5.5 6 V16.2 H17.5 L15 12.5 L12.5 13.8 L10 11 L5.5 8.5 M5.5 10 L9 7.3 L11.5 8.8 L16.5 4.5" fill="none" stroke="#31363b" stroke-width="1.2"/></svg>
<div class="t" style="top:791.28px;font-size:15px;color:#232627;left:113.1px;">Gumbel_plot</div>
<div class="t" style="top:791.28px;font-size:15px;color:#232627;left:289px;">Worksheet</div>
</div>
<div class="a" style="left:32px;top:796px;width:356px;height:9px;background:#fcfcfc;"></div>
<div class="a" style="left:390.8px;top:168px;width:4px;height:619px;background:#b9bbbd;border-radius:2px;"></div>
<div class="a" style="left:390.8px;top:407px;width:4px;height:337px;background:#76797c;border-radius:2px;"></div>
<svg class="a" style="left:390px;top:160px;" width="6" height="4" viewBox="0 0 6 4"><path d="M0.5 3.5 L3 1 L5.5 3.5" fill="none" stroke="#666" stroke-width="0.9"/></svg>
<svg class="a" style="left:390px;top:790px;" width="6" height="4" viewBox="0 0 6 4"><path d="M0.5 0.5 L3 3 L5.5 0.5" fill="none" stroke="#666" stroke-width="0.9"/></svg>
<div class="a" style="left:42px;top:798.5px;width:337px;height:4.5px;background:#b9bbbd;border-radius:2px;"></div>
<div class="a" style="left:42px;top:798.5px;width:306px;height:4.5px;background:#76797c;border-radius:2px;"></div>
<svg class="a" style="left:36px;top:798px;" width="4" height="6" viewBox="0 0 4 6"><path d="M3.5 0.5 L1 3 L3.5 5.5" fill="none" stroke="#999" stroke-width="0.9"/></svg>
<svg class="a" style="left:383px;top:798px;" width="4" height="6" viewBox="0 0 4 6"><path d="M0.5 0.5 L3 3 L0.5 5.5" fill="none" stroke="#666" stroke-width="0.9"/></svg>
<div class="a" style="left:400px;top:102px;width:649px;height:705px;background:#878b91;"></div>
<div class="a" style="left:548px;top:106px;width:479px;height:597px;background:#eff0f1;box-shadow:0 0 2px rgba(0,0,0,0.35);"></div>
<svg class="a" style="left:553px;top:112px;" width="17" height="17" viewBox="0 0 17 17"><rect x="0" y="0" width="17" height="17" fill="#fcfcfc"/><path d="M0.5 0 V17 M0 0.5 H17" stroke="#31363b" stroke-width="1.05"/><path d="M3.7 0 V17 M0 3.7 H17" stroke="#31363b" stroke-width="1.05"/><path d="M6.9 0 V17 M0 6.9 H17" stroke="#31363b" stroke-width="1.05"/><path d="M10.1 0 V17 M0 10.1 H17" stroke="#31363b" stroke-width="1.05"/><path d="M13.3 0 V17 M0 13.3 H17" stroke="#31363b" stroke-width="1.05"/><path d="M16.5 0 V17 M0 16.5 H17" stroke="#31363b" stroke-width="1.05"/><rect x="0.6" y="0.6" width="15.8" height="15.8" fill="none" stroke="#31363b" stroke-width="1.2"/><rect x="1" y="1" width="6" height="6" fill="#3daee9"/></svg>
<div class="t" style="top:112.20px;font-size:15px;color:#a9adb0;left:677px;">Maxwell-Boltzmann_data</div>
<svg class="a" style="left:956px;top:116px;" width="13" height="8" viewBox="0 0 13 8"><path d="M0.8 0.8 L6.2 6.2 L11.6 0.8" stroke="#5f6469" stroke-width="1.3" fill="none"/></svg>
<svg class="a" style="left:981px;top:116px;" width="13" height="8" viewBox="0 0 13 8"><path d="M0.8 7.2 L6.2 1.8 L11.6 7.2" stroke="#5f6469" stroke-width="1.3" fill="none"/></svg>
<svg class="a" style="left:1002px;top:109px;" width="22" height="22" viewBox="0 0 22 22"><circle cx="11" cy="11" r="11" fill="#8b8f93"/><path d="M6.05 6.05 L15.95 15.95 M15.95 6.05 L6.05 15.95" stroke="#fcfcfc" stroke-width="1.4"/></svg>
<div class="a" style="left:553.5px;top:133px;width:467.5px;height:564.5px;background:#fcfcfc;box-sizing:border-box;border:1px solid #d5d7d9;"></div>
<div class="a" style="left:554.5px;top:134px;width:457px;height:22px;background:#eff0f1;"></div>
<div class="a" style="left:554.5px;top:156px;width:30px;height:540.5px;background:#eff0f1;"></div>
<div class="a" style="left:584.4px;top:156px;width:1px;height:540.5px;background:#dcdee0;"></div>
<div class="a" style="left:713.5px;top:134px;width:1px;height:562.5px;background:#dcdee0;"></div>
<div class="a" style="left:859.5px;top:134px;width:1px;height:562.5px;background:#dcdee0;"></div>
<div class="a" style="left:554.5px;top:156px;width:457px;height:1px;background:#dcdee0;"></div>
<div class="a" style="left:584.4px;top:175.3px;width:427px;height:1px;background:#e3e4e6;"></div>
<div class="a" style="left:584.4px;top:194px;width:427px;height:1px;background:#e3e4e6;"></div>
<svg class="a" style="left:591px;top:137px;" width="17" height="17" viewBox="0 0 17 17"><path d="M0 0.5 H16" stroke="#31363b" stroke-width="1"/><path d="M0 2.5 H9" stroke="#31363b" stroke-width="1"/><path d="M0 6.5 H16" stroke="#31363b" stroke-width="1"/><path d="M0 8.5 H10" stroke="#31363b" stroke-width="1"/><path d="M0 12.5 H16" stroke="#31363b" stroke-width="1"/><path d="M0 14.5 H13" stroke="#31363b" stroke-width="1"/><rect x="14.5" y="15" width="1.6" height="1.5" fill="#31363b"/></svg>
<svg class="a" style="left:720px;top:137px;" width="17" height="17" viewBox="0 0 17 17"><path d="M0 0.5 H16" stroke="#31363b" stroke-width="1"/><path d="M0 2.5 H9" stroke="#31363b" stroke-width="1"/><path d="M0 6.5 H16" stroke="#31363b" stroke-width="1"/><path d="M0 8.5 H10" stroke="#31363b" stroke-width="1"/><path d="M0 12.5 H16" stroke="#31363b" stroke-width="1"/><path d="M0 14.5 H13" stroke="#31363b" stroke-width="1"/><rect x="14.5" y="15" width="1.6" height="1.5" fill="#31363b"/></svg>
<svg class="a" style="left:866px;top:137px;" width="17" height="17" viewBox="0 0 17 17"><path d="M0 0.5 H16" stroke="#31363b" stroke-width="1"/><path d="M0 2.5 H9" stroke="#31363b" stroke-width="1"/><path d="M0 6.5 H16" stroke="#31363b" stroke-width="1"/><path d="M0 8.5 H10" stroke="#31363b" stroke-width="1"/><path d="M0 12.5 H16" stroke="#31363b" stroke-width="1"/><path d="M0 14.5 H13" stroke="#31363b" stroke-width="1"/><rect x="14.5" y="15" width="1.6" height="1.5" fill="#31363b"/></svg>
<div class="t" style="top:135.60px;font-size:15px;color:#232627;left:611.6px;">x {Numeric}</div>
<div class="t" style="top:135.60px;font-size:15px;color:#232627;left:739.5px;">y_true {Numeric}</div>
<div class="t" style="top:135.60px;font-size:15px;color:#232627;left:886.1px;">y_meas {Numeric}</div>
<div class="t" style="top:158.30px;font-size:15px;color:#232627;left:558px;">1</div>
<div class="t" style="top:158.30px;font-size:15px;color:#232627;left:587px;">0,000000e+00</div>
<div class="t" style="top:158.30px;font-size:15px;color:#232627;left:715.4px;">0,000000e+00</div>
<div class="t" style="top:158.30px;font-size:15px;color:#232627;left:861.7px;">-2,373721e-03</div>
<div class="t" style="top:177.00px;font-size:15px;color:#232627;left:558px;">2</div>
<div class="t" style="top:177.00px;font-size:15px;color:#232627;left:587px;">1,000000e+00</div>
<div class="t" style="top:177.00px;font-size:15px;color:#232627;left:715.4px;">3,459171e-04</div>
<div class="t" style="top:177.00px;font-size:15px;color:#232627;left:861.7px;">-3,011469e-03</div>
<div class="t" style="top:195.90px;font-size:15px;color:#232627;left:558px;">3</div>
<div class="t" style="top:195.90px;font-size:15px;color:#232627;left:587px;">2,000000e+00</div>
<div class="t" style="top:195.90px;font-size:15px;color:#232627;left:715.4px;">1,371808e-03</div>
<div class="t" style="top:195.90px;font-size:15px;color:#232627;left:861.7px;">-8,963710e-04</div>
<div class="a" style="left:1008.5px;top:212.7px;width:3px;height:1px;background:#e3e4e6;"></div>
<div class="a" style="left:1008.5px;top:231.5px;width:3px;height:1px;background:#e3e4e6;"></div>
<div class="a" style="left:1008.5px;top:250.29999999999998px;width:3px;height:1px;background:#e3e4e6;"></div>
<div class="a" style="left:1008.5px;top:269.1px;width:3px;height:1px;background:#e3e4e6;"></div>
<div class="a" style="left:1008.5px;top:287.9px;width:3px;height:1px;background:#e3e4e6;"></div>
<div class="a" style="left:1008.5px;top:306.7px;width:3px;height:1px;background:#e3e4e6;"></div>
<div class="a" style="left:1008.5px;top:325.5px;width:3px;height:1px;background:#e3e4e6;"></div>
<div class="a" style="left:1008.5px;top:344.29999999999995px;width:3px;height:1px;background:#e3e4e6;"></div>
<div class="a" style="left:1008.5px;top:363.1px;width:3px;height:1px;background:#e3e4e6;"></div>
<div class="a" style="left:1008.5px;top:381.9px;width:3px;height:1px;background:#e3e4e6;"></div>
<div class="a" style="left:1008.5px;top:400.7px;width:3px;height:1px;background:#e3e4e6;"></div>
<div class="a" style="left:1008.5px;top:419.5px;width:3px;height:1px;background:#e3e4e6;"></div>
<div class="a" style="left:1008.5px;top:438.3px;width:3px;height:1px;background:#e3e4e6;"></div>
<div class="a" style="left:1008.5px;top:457.1px;width:3px;height:1px;background:#e3e4e6;"></div>
<div class="a" style="left:1008.5px;top:475.9px;width:3px;height:1px;background:#e3e4e6;"></div>
<div class="a" style="left:1008.5px;top:494.7px;width:3px;height:1px;background:#e3e4e6;"></div>
<div class="a" style="left:1008.5px;top:513.5px;width:3px;height:1px;background:#e3e4e6;"></div>
<div class="a" style="left:1008.5px;top:532.3px;width:3px;height:1px;background:#e3e4e6;"></div>
<div class="a" style="left:1008.5px;top:551.1px;width:3px;height:1px;background:#e3e4e6;"></div>
<div class="a" style="left:1008.5px;top:569.9px;width:3px;height:1px;background:#e3e4e6;"></div>
<div class="a" style="left:1008.5px;top:588.7px;width:3px;height:1px;background:#e3e4e6;"></div>
<div class="a" style="left:1008.5px;top:607.5px;width:3px;height:1px;background:#e3e4e6;"></div>
<div class="a" style="left:1008.5px;top:626.3px;width:3px;height:1px;background:#e3e4e6;"></div>
<div class="a" style="left:1008.5px;top:645.1px;width:3px;height:1px;background:#e3e4e6;"></div>
<div class="a" style="left:1008.5px;top:663.9000000000001px;width:3px;height:1px;background:#e3e4e6;"></div>
<div class="a" style="left:1008.5px;top:682.7px;width:3px;height:1px;background:#e3e4e6;"></div>
<div class="a" style="left:1014px;top:143.5px;width:4.5px;height:534.5px;background:#b9bbbd;border-radius:2px;"></div>
<div class="a" style="left:1014px;top:143.5px;width:4.5px;height:149.5px;background:#76797c;border-radius:2px;"></div>
<svg class="a" style="left:1013px;top:136px;" width="6" height="4" viewBox="0 0 6 4"><path d="M0.5 3.5 L3 1 L5.5 3.5" fill="none" stroke="#666" stroke-width="0.9"/></svg>
<svg class="a" style="left:1013px;top:683px;" width="6" height="4" viewBox="0 0 6 4"><path d="M0.5 0.5 L3 3 L5.5 0.5" fill="none" stroke="#666" stroke-width="0.9"/></svg>
<div class="a" style="left:403px;top:211.5px;width:605.5px;height:588.5px;background:#f6f7f8;box-shadow:0 1px 3px rgba(0,0,0,0.45);"></div>
<div class="a" style="left:403px;top:211.5px;width:605.5px;height:25.5px;background:#474f56;"></div>
<div class="a" style="left:403px;top:237px;width:605.5px;height:1px;background:#3daee9;"></div>
<svg class="a" style="left:408px;top:215px;" width="18" height="17" viewBox="0 0 18 17"><path d="M4 0.8 H17.2 V9 M0.8 4 V16.2 H2" fill="none" stroke="#5b5650" stroke-width="1.3"/><path d="M4.5 4 V16.2 H17 M4.5 10.5 L9.5 6 L12.5 8 L16.5 4 M4.5 10.5 L9 15 L13 12 L16.5 16" fill="none" stroke="#5b5650" stroke-width="1.25"/></svg>
<div class="t" style="top:217.20px;font-size:15px;color:#fcfcfc;left:596.5px;">Maxwell-Boltzmann_plot</div>
<svg class="a" style="left:938px;top:221px;" width="13" height="8" viewBox="0 0 13 8"><path d="M0.8 0.8 L6.2 6.2 L11.6 0.8" stroke="#fcfcfc" stroke-width="1.3" fill="none"/></svg>
<svg class="a" style="left:963px;top:221px;" width="13" height="8" viewBox="0 0 13 8"><path d="M0.8 7.2 L6.2 1.8 L11.6 7.2" stroke="#fcfcfc" stroke-width="1.3" fill="none"/></svg>
<svg class="a" style="left:983px;top:213px;" width="22.6" height="22.6" viewBox="0 0 22.6 22.6"><circle cx="11.3" cy="11.3" r="11.3" fill="#fcfcfc"/><path d="M6.215 6.215 L16.385 16.385 M16.385 6.215 L6.215 16.385" stroke="#31363b" stroke-width="1.3"/></svg>
<div class="a" style="left:409px;top:238px;width:594px;height:555px;background:#c0c0c0;"></div>
<div class="a" style="left:450px;top:260px;width:532px;height:533px;background:#808080;"></div>
<div class="a" style="left:439px;top:248.7px;width:532.6px;height:534.3px;background:#ffffff;"></div>
<svg class="a" style="left:0;top:0;font-family:Liberation Sans;" width="1504" height="846" viewBox="0 0 1504 846"><rect x="458.5" y="267" width="495.5" height="311.5" fill="#fff" stroke="#000" stroke-width="1.6"/><text x="716.00" y="280.40" font-size="13.5" text-anchor="middle" fill="#000" >fit to data</text><line x1="560.25" y1="305.90" x2="560.25" y2="538.90" stroke="#8c8c8c" stroke-width="1" stroke-dasharray="2.2 2.2"/><line x1="657.75" y1="305.90" x2="657.75" y2="538.90" stroke="#8c8c8c" stroke-width="1" stroke-dasharray="2.2 2.2"/><line x1="755.25" y1="305.90" x2="755.25" y2="538.90" stroke="#8c8c8c" stroke-width="1" stroke-dasharray="2.2 2.2"/><line x1="852.75" y1="305.90" x2="852.75" y2="538.90" stroke="#8c8c8c" stroke-width="1" stroke-dasharray="2.2 2.2"/><line x1="511.50" y1="509.77" x2="901.50" y2="509.77" stroke="#8c8c8c" stroke-width="1" stroke-dasharray="2.2 2.2"/><line x1="511.50" y1="451.52" x2="901.50" y2="451.52" stroke="#8c8c8c" stroke-width="1" stroke-dasharray="2.2 2.2"/><line x1="511.50" y1="393.27" x2="901.50" y2="393.27" stroke="#8c8c8c" stroke-width="1" stroke-dasharray="2.2 2.2"/><line x1="511.50" y1="335.02" x2="901.50" y2="335.02" stroke="#8c8c8c" stroke-width="1" stroke-dasharray="2.2 2.2"/><line x1="609.00" y1="305.90" x2="609.00" y2="538.90" stroke="#a8a8a8" stroke-width="1.2" /><line x1="706.50" y1="305.90" x2="706.50" y2="538.90" stroke="#a8a8a8" stroke-width="1.2" /><line x1="804.00" y1="305.90" x2="804.00" y2="538.90" stroke="#a8a8a8" stroke-width="1.2" /><line x1="511.50" y1="480.65" x2="901.50" y2="480.65" stroke="#a8a8a8" stroke-width="1.2" /><line x1="511.50" y1="422.40" x2="901.50" y2="422.40" stroke="#a8a8a8" stroke-width="1.2" /><line x1="511.50" y1="364.15" x2="901.50" y2="364.15" stroke="#a8a8a8" stroke-width="1.2" /><polyline points="511.50,480.65 512.48,480.64 513.45,480.61 514.42,480.56 515.40,480.49 516.38,480.40 517.35,480.28 518.33,480.15 519.30,480.00 520.27,479.83 521.25,479.63 522.23,479.42 523.20,479.19 524.17,478.93 525.15,478.66 526.12,478.37 527.10,478.06 528.08,477.73 529.05,477.37 530.02,477.00 531.00,476.62 531.98,476.21 532.95,475.78 533.92,475.33 534.90,474.87 535.88,474.39 536.85,473.89 537.83,473.37 538.80,472.83 539.77,472.27 540.75,471.70 541.73,471.11 542.70,470.51 543.67,469.88 544.65,469.24 545.62,468.58 546.60,467.91 547.58,467.22 548.55,466.52 549.52,465.80 550.50,465.06 551.48,464.31 552.45,463.54 553.42,462.76 554.40,461.97 555.38,461.16 556.35,460.34 557.33,459.50 558.30,458.65 559.27,457.79 560.25,456.92 561.23,456.03 562.20,455.13 563.17,454.22 564.15,453.30 565.12,452.36 566.10,451.42 567.08,450.47 568.05,449.50 569.02,448.53 570.00,447.54 570.98,446.55 571.95,445.55 572.92,444.54 573.90,443.52 574.88,442.49 575.85,441.46 576.83,440.41 577.80,439.36 578.77,438.31 579.75,437.25 580.73,436.18 581.70,435.11 582.67,434.03 583.65,432.95 584.62,431.86 585.60,430.77 586.58,429.67 587.55,428.57 588.52,427.47 589.50,426.37 590.48,425.26 591.45,424.15 592.42,423.04 593.40,421.92 594.38,420.81 595.35,419.70 596.33,418.58 597.30,417.47 598.27,416.35 599.25,415.24 600.23,414.13 601.20,413.01 602.17,411.90 603.15,410.80 604.12,409.69 605.10,408.59 606.08,407.49 607.05,406.39 608.02,405.30 609.00,404.21 609.98,403.12 610.95,402.04 611.92,400.97 612.90,399.90 613.88,398.83 614.85,397.77 615.83,396.72 616.80,395.67 617.77,394.63 618.75,393.60 619.73,392.57 620.70,391.55 621.67,390.54 622.65,389.54 623.62,388.55 624.60,387.56 625.58,386.59 626.55,385.62 627.52,384.66 628.50,383.71 629.48,382.77 630.45,381.84 631.42,380.93 632.40,380.02 633.38,379.12 634.35,378.24 635.33,377.36 636.30,376.50 637.27,375.65 638.25,374.81 639.23,373.98 640.20,373.17 641.17,372.36 642.15,371.57 643.12,370.80 644.10,370.03 645.08,369.28 646.05,368.54 647.02,367.82 648.00,367.11 648.98,366.41 649.95,365.73 650.92,365.06 651.90,364.40 652.88,363.76 653.85,363.14 654.83,362.53 655.80,361.93 656.77,361.35 657.75,360.78 658.73,360.23 659.70,359.69 660.67,359.17 661.65,358.66 662.62,358.17 663.60,357.70 664.58,357.24 665.55,356.79 666.52,356.36 667.50,355.95 668.48,355.55 669.45,355.17 670.42,354.80 671.40,354.45 672.38,354.11 673.35,353.79 674.33,353.49 675.30,353.20 676.27,352.93 677.25,352.67 678.23,352.43 679.20,352.21 680.17,352.00 681.15,351.80 682.12,351.63 683.10,351.46 684.08,351.32 685.05,351.19 686.02,351.07 687.00,350.97 687.98,350.89 688.95,350.82 689.92,350.76 690.90,350.72 691.88,350.70 692.85,350.69 693.83,350.70 694.80,350.72 695.77,350.76 696.75,350.81 697.73,350.87 698.70,350.95 699.67,351.05 700.65,351.16 701.62,351.28 702.60,351.42 703.58,351.57 704.55,351.74 705.52,351.92 706.50,352.11 707.48,352.32 708.45,352.54 709.42,352.77 710.40,353.02 711.38,353.27 712.35,353.55 713.33,353.83 714.30,354.13 715.27,354.44 716.25,354.76 717.23,355.10 718.20,355.44 719.17,355.80 720.15,356.17 721.12,356.55 722.10,356.94 723.08,357.35 724.05,357.76 725.02,358.19 726.00,358.63 726.98,359.07 727.95,359.53 728.92,360.00 729.90,360.47 730.88,360.96 731.85,361.46 732.83,361.96 733.80,362.48 734.77,363.00 735.75,363.54 736.73,364.08 737.70,364.63 738.67,365.19 739.65,365.76 740.62,366.33 741.60,366.91 742.58,367.50 743.55,368.10 744.52,368.71 745.50,369.32 746.48,369.94 747.45,370.57 748.42,371.20 749.40,371.84 750.38,372.48 751.35,373.13 752.33,373.79 753.30,374.45 754.27,375.12 755.25,375.79 756.23,376.47 757.20,377.15 758.17,377.84 759.15,378.53 760.12,379.23 761.10,379.93 762.08,380.64 763.05,381.34 764.02,382.06 765.00,382.77 765.98,383.49 766.95,384.21 767.92,384.94 768.90,385.67 769.88,386.40 770.85,387.13 771.83,387.86 772.80,388.60 773.77,389.34 774.75,390.08 775.73,390.82 776.70,391.57 777.67,392.31 778.65,393.06 779.62,393.81 780.60,394.56 781.58,395.31 782.55,396.06 783.52,396.81 784.50,397.56 785.48,398.31 786.45,399.06 787.42,399.81 788.40,400.56 789.38,401.31 790.35,402.06 791.33,402.81 792.30,403.55 793.27,404.30 794.25,405.05 795.23,405.79 796.20,406.53 797.17,407.28 798.15,408.02 799.12,408.76 800.10,409.49 801.08,410.23 802.05,410.96 803.02,411.69 804.00,412.42 804.98,413.15 805.95,413.87 806.92,414.59 807.90,415.31 808.88,416.03 809.85,416.74 810.83,417.45 811.80,418.16 812.77,418.86 813.75,419.57 814.73,420.26 815.70,420.96 816.67,421.65 817.65,422.34 818.62,423.02 819.60,423.70 820.58,424.38 821.55,425.06 822.52,425.73 823.50,426.39 824.48,427.05 825.45,427.71 826.42,428.37 827.40,429.02 828.38,429.66 829.35,430.30 830.33,430.94 831.30,431.57 832.27,432.20 833.25,432.83 834.23,433.44 835.20,434.06 836.17,434.67 837.15,435.28 838.12,435.88 839.10,436.48 840.08,437.07 841.05,437.66 842.02,438.24 843.00,438.82 843.98,439.39 844.95,439.96 845.92,440.52 846.90,441.08 847.88,441.63 848.85,442.18 849.83,442.73 850.80,443.27 851.77,443.80 852.75,444.33 853.73,444.85 854.70,445.37 855.67,445.89 856.65,446.40 857.62,446.90 858.60,447.40 859.58,447.90 860.55,448.39 861.52,448.87 862.50,449.35 863.48,449.82 864.45,450.29 865.42,450.76 866.40,451.22 867.38,451.67 868.35,452.12 869.33,452.57 870.30,453.01 871.27,453.44 872.25,453.87 873.23,454.30 874.20,454.72 875.17,455.13 876.15,455.54 877.12,455.95 878.10,456.35 879.08,456.75 880.05,457.14 881.02,457.53 882.00,457.91 882.98,458.28 883.95,458.66 884.92,459.02 885.90,459.39 886.88,459.75 887.85,460.10 888.83,460.45 889.80,460.80 890.77,461.14 891.75,461.47 892.73,461.80 893.70,462.13 894.67,462.45 895.65,462.77 896.62,463.09 897.60,463.40 898.58,463.70 899.55,464.00 900.52,464.30 901.50,464.59" fill="none" stroke="#0d0d2e" stroke-width="1.7"/><circle cx="511.50" cy="487.55" r="3.5" fill="#ff0000" stroke="#900" stroke-width="0.5"/><circle cx="521.25" cy="490.03" r="3.5" fill="#ff0000" stroke="#900" stroke-width="0.5"/><circle cx="531.00" cy="483.51" r="3.5" fill="#ff0000" stroke="#900" stroke-width="0.5"/><circle cx="540.75" cy="485.88" r="3.5" fill="#ff0000" stroke="#900" stroke-width="0.5"/><circle cx="550.50" cy="461.18" r="3.5" fill="#ff0000" stroke="#900" stroke-width="0.5"/><circle cx="560.25" cy="461.19" r="3.5" fill="#ff0000" stroke="#900" stroke-width="0.5"/><circle cx="570.00" cy="452.99" r="3.5" fill="#ff0000" stroke="#900" stroke-width="0.5"/><circle cx="579.75" cy="425.22" r="3.5" fill="#ff0000" stroke="#900" stroke-width="0.5"/><circle cx="589.50" cy="451.90" r="3.5" fill="#ff0000" stroke="#900" stroke-width="0.5"/><circle cx="599.25" cy="405.24" r="3.5" fill="#ff0000" stroke="#900" stroke-width="0.5"/><circle cx="609.00" cy="402.95" r="3.5" fill="#ff0000" stroke="#900" stroke-width="0.5"/><circle cx="618.75" cy="392.05" r="3.5" fill="#ff0000" stroke="#900" stroke-width="0.5"/><circle cx="628.50" cy="394.10" r="3.5" fill="#ff0000" stroke="#900" stroke-width="0.5"/><circle cx="638.25" cy="391.61" r="3.5" fill="#ff0000" stroke="#900" stroke-width="0.5"/><circle cx="648.00" cy="359.44" r="3.5" fill="#ff0000" stroke="#900" stroke-width="0.5"/><circle cx="657.75" cy="367.10" r="3.5" fill="#ff0000" stroke="#900" stroke-width="0.5"/><circle cx="667.50" cy="348.87" r="3.5" fill="#ff0000" stroke="#900" stroke-width="0.5"/><circle cx="677.25" cy="343.26" r="3.5" fill="#ff0000" stroke="#900" stroke-width="0.5"/><circle cx="687.00" cy="353.50" r="3.5" fill="#ff0000" stroke="#900" stroke-width="0.5"/><circle cx="696.75" cy="350.72" r="3.5" fill="#ff0000" stroke="#900" stroke-width="0.5"/><circle cx="706.50" cy="337.16" r="3.5" fill="#ff0000" stroke="#900" stroke-width="0.5"/><circle cx="716.25" cy="366.32" r="3.5" fill="#ff0000" stroke="#900" stroke-width="0.5"/><circle cx="726.00" cy="372.22" r="3.5" fill="#ff0000" stroke="#900" stroke-width="0.5"/><circle cx="735.75" cy="366.36" r="3.5" fill="#ff0000" stroke="#900" stroke-width="0.5"/><circle cx="745.50" cy="376.22" r="3.5" fill="#ff0000" stroke="#900" stroke-width="0.5"/><circle cx="755.25" cy="372.21" r="3.5" fill="#ff0000" stroke="#900" stroke-width="0.5"/><circle cx="765.00" cy="380.64" r="3.5" fill="#ff0000" stroke="#900" stroke-width="0.5"/><circle cx="774.75" cy="404.26" r="3.5" fill="#ff0000" stroke="#900" stroke-width="0.5"/><circle cx="784.50" cy="409.70" r="3.5" fill="#ff0000" stroke="#900" stroke-width="0.5"/><circle cx="794.25" cy="413.69" r="3.5" fill="#ff0000" stroke="#900" stroke-width="0.5"/><circle cx="804.00" cy="429.51" r="3.5" fill="#ff0000" stroke="#900" stroke-width="0.5"/><circle cx="813.75" cy="421.80" r="3.5" fill="#ff0000" stroke="#900" stroke-width="0.5"/><circle cx="823.50" cy="423.97" r="3.5" fill="#ff0000" stroke="#900" stroke-width="0.5"/><circle cx="833.25" cy="430.70" r="3.5" fill="#ff0000" stroke="#900" stroke-width="0.5"/><circle cx="843.00" cy="437.27" r="3.5" fill="#ff0000" stroke="#900" stroke-width="0.5"/><circle cx="852.75" cy="424.43" r="3.5" fill="#ff0000" stroke="#900" stroke-width="0.5"/><circle cx="862.50" cy="444.31" r="3.5" fill="#ff0000" stroke="#900" stroke-width="0.5"/><circle cx="872.25" cy="424.66" r="3.5" fill="#ff0000" stroke="#900" stroke-width="0.5"/><circle cx="882.00" cy="474.13" r="3.5" fill="#ff0000" stroke="#900" stroke-width="0.5"/><circle cx="891.75" cy="470.12" r="3.5" fill="#ff0000" stroke="#900" stroke-width="0.5"/><circle cx="901.50" cy="476.73" r="3.5" fill="#ff0000" stroke="#900" stroke-width="0.5"/><rect x="511.5" y="305.9" width="390" height="233" fill="none" stroke="#000" stroke-width="1.6"/><line x1="511.50" y1="538.90" x2="511.50" y2="530.90" stroke="#000" stroke-width="1.5" /><line x1="609.00" y1="538.90" x2="609.00" y2="530.90" stroke="#000" stroke-width="1.5" /><line x1="706.50" y1="538.90" x2="706.50" y2="530.90" stroke="#000" stroke-width="1.5" /><line x1="804.00" y1="538.90" x2="804.00" y2="530.90" stroke="#000" stroke-width="1.5" /><line x1="901.50" y1="538.90" x2="901.50" y2="530.90" stroke="#000" stroke-width="1.5" /><line x1="560.25" y1="538.90" x2="560.25" y2="534.90" stroke="#000" stroke-width="1.5" /><line x1="657.75" y1="538.90" x2="657.75" y2="534.90" stroke="#000" stroke-width="1.5" /><line x1="755.25" y1="538.90" x2="755.25" y2="534.90" stroke="#000" stroke-width="1.5" /><line x1="852.75" y1="538.90" x2="852.75" y2="534.90" stroke="#000" stroke-width="1.5" /><line x1="511.50" y1="538.90" x2="519.50" y2="538.90" stroke="#000" stroke-width="1.5" /><line x1="511.50" y1="480.65" x2="519.50" y2="480.65" stroke="#000" stroke-width="1.5" /><line x1="511.50" y1="422.40" x2="519.50" y2="422.40" stroke="#000" stroke-width="1.5" /><line x1="511.50" y1="364.15" x2="519.50" y2="364.15" stroke="#000" stroke-width="1.5" /><line x1="511.50" y1="305.90" x2="519.50" y2="305.90" stroke="#000" stroke-width="1.5" /><line x1="511.50" y1="509.77" x2="515.50" y2="509.77" stroke="#000" stroke-width="1.5" /><line x1="511.50" y1="451.52" x2="515.50" y2="451.52" stroke="#000" stroke-width="1.5" /><line x1="511.50" y1="393.27" x2="515.50" y2="393.27" stroke="#000" stroke-width="1.5" /><line x1="511.50" y1="335.02" x2="515.50" y2="335.02" stroke="#000" stroke-width="1.5" /><line x1="511.50" y1="305.90" x2="511.50" y2="313.90" stroke="#000" stroke-width="1.5" /><line x1="589.50" y1="305.90" x2="589.50" y2="313.90" stroke="#000" stroke-width="1.5" /><line x1="667.50" y1="305.90" x2="667.50" y2="313.90" stroke="#000" stroke-width="1.5" /><line x1="745.50" y1="305.90" x2="745.50" y2="313.90" stroke="#000" stroke-width="1.5" /><line x1="823.50" y1="305.90" x2="823.50" y2="313.90" stroke="#000" stroke-width="1.5" /><line x1="901.50" y1="305.90" x2="901.50" y2="313.90" stroke="#000" stroke-width="1.5" /><line x1="550.50" y1="305.90" x2="550.50" y2="309.90" stroke="#000" stroke-width="1.5" /><line x1="628.50" y1="305.90" x2="628.50" y2="309.90" stroke="#000" stroke-width="1.5" /><line x1="706.50" y1="305.90" x2="706.50" y2="309.90" stroke="#000" stroke-width="1.5" /><line x1="784.50" y1="305.90" x2="784.50" y2="309.90" stroke="#000" stroke-width="1.5" /><line x1="862.50" y1="305.90" x2="862.50" y2="309.90" stroke="#000" stroke-width="1.5" /><line x1="901.50" y1="305.90" x2="893.50" y2="305.90" stroke="#000" stroke-width="1.5" /><line x1="901.50" y1="352.50" x2="893.50" y2="352.50" stroke="#000" stroke-width="1.5" /><line x1="901.50" y1="399.10" x2="893.50" y2="399.10" stroke="#000" stroke-width="1.5" /><line x1="901.50" y1="445.70" x2="893.50" y2="445.70" stroke="#000" stroke-width="1.5" /><line x1="901.50" y1="492.30" x2="893.50" y2="492.30" stroke="#000" stroke-width="1.5" /><line x1="901.50" y1="538.90" x2="893.50" y2="538.90" stroke="#000" stroke-width="1.5" /><line x1="901.50" y1="329.20" x2="897.50" y2="329.20" stroke="#000" stroke-width="1.5" /><line x1="901.50" y1="375.80" x2="897.50" y2="375.80" stroke="#000" stroke-width="1.5" /><line x1="901.50" y1="422.40" x2="897.50" y2="422.40" stroke="#000" stroke-width="1.5" /><line x1="901.50" y1="469.00" x2="897.50" y2="469.00" stroke="#000" stroke-width="1.5" /><line x1="901.50" y1="515.60" x2="897.50" y2="515.60" stroke="#000" stroke-width="1.5" /><text x="505.00" y="312.40" font-size="12" text-anchor="end" fill="#000" >0.06</text><text x="505.00" y="370.65" font-size="12" text-anchor="end" fill="#000" >0.04</text><text x="505.00" y="428.90" font-size="12" text-anchor="end" fill="#000" >0.02</text><text x="505.00" y="487.15" font-size="12" text-anchor="end" fill="#000" >0.00</text><text x="505.00" y="545.40" font-size="12" text-anchor="end" fill="#000" >-0.02</text><text x="511.50" y="558.40" font-size="12" text-anchor="middle" fill="#000" >0.0</text><text x="609.00" y="558.40" font-size="12" text-anchor="middle" fill="#000" >10.0</text><text x="706.50" y="558.40" font-size="12" text-anchor="middle" fill="#000" >20.0</text><text x="804.00" y="558.40" font-size="12" text-anchor="middle" fill="#000" >30.0</text><text x="901.50" y="558.40" font-size="12" text-anchor="middle" fill="#000" >40.0</text><text x="702.00" y="574.50" font-size="12.5" text-anchor="middle" fill="#000" >x</text><text x="0" y="0" font-size="12.5" text-anchor="middle" transform="translate(465,426) rotate(90)">y</text><rect x="752.5" y="482.5" width="136.5" height="43.5" fill="#fff" stroke="#000" stroke-width="1.6"/><circle cx="777.3" cy="496.3" r="3.5" fill="#ff0000" stroke="#900" stroke-width="0.5"/><text x="799.40" y="502.80" font-size="12.5" text-anchor="start" fill="#000" >measured data</text><line x1="759.40" y1="513.80" x2="795.60" y2="513.80" stroke="#0d0d2e" stroke-width="1.7" /><text x="799.40" y="518.70" font-size="12.5" text-anchor="start" fill="#000" >fit</text><rect x="456.4" y="601.4" width="496.4" height="168.60000000000002" fill="#fff" stroke="#000" stroke-width="1.6"/><text x="688.00" y="614.50" font-size="13.5" text-anchor="middle" fill="#000" >residuals</text><line x1="552.62" y1="644.40" x2="552.62" y2="726.90" stroke="#8c8c8c" stroke-width="1" stroke-dasharray="2.2 2.2"/><line x1="653.67" y1="644.40" x2="653.67" y2="726.90" stroke="#8c8c8c" stroke-width="1" stroke-dasharray="2.2 2.2"/><line x1="754.72" y1="644.40" x2="754.72" y2="726.90" stroke="#8c8c8c" stroke-width="1" stroke-dasharray="2.2 2.2"/><line x1="855.77" y1="644.40" x2="855.77" y2="726.90" stroke="#8c8c8c" stroke-width="1" stroke-dasharray="2.2 2.2"/><line x1="502.10" y1="706.27" x2="906.30" y2="706.27" stroke="#8c8c8c" stroke-width="1" stroke-dasharray="2.2 2.2"/><line x1="502.10" y1="665.02" x2="906.30" y2="665.02" stroke="#8c8c8c" stroke-width="1" stroke-dasharray="2.2 2.2"/><line x1="603.15" y1="644.40" x2="603.15" y2="726.90" stroke="#a8a8a8" stroke-width="1.2" /><line x1="704.20" y1="644.40" x2="704.20" y2="726.90" stroke="#a8a8a8" stroke-width="1.2" /><line x1="805.25" y1="644.40" x2="805.25" y2="726.90" stroke="#a8a8a8" stroke-width="1.2" /><line x1="502.10" y1="685.65" x2="906.30" y2="685.65" stroke="#a8a8a8" stroke-width="1.2" /><line x1="502.10" y1="685.65" x2="502.10" y2="676.16" stroke="#000" stroke-width="1.6" /><circle cx="502.10" cy="676.16" r="3.1" fill="#000"/><line x1="512.21" y1="685.65" x2="512.21" y2="671.21" stroke="#000" stroke-width="1.6" /><circle cx="512.21" cy="671.21" r="3.1" fill="#000"/><line x1="522.31" y1="685.65" x2="522.31" y2="676.16" stroke="#000" stroke-width="1.6" /><circle cx="522.31" cy="676.16" r="3.1" fill="#000"/><line x1="532.41" y1="685.65" x2="532.41" y2="665.85" stroke="#000" stroke-width="1.6" /><circle cx="532.41" cy="665.85" r="3.1" fill="#000"/><line x1="542.52" y1="685.65" x2="542.52" y2="691.42" stroke="#000" stroke-width="1.6" /><circle cx="542.52" cy="691.42" r="3.1" fill="#000"/><line x1="552.62" y1="685.65" x2="552.62" y2="679.88" stroke="#000" stroke-width="1.6" /><circle cx="552.62" cy="679.88" r="3.1" fill="#000"/><line x1="562.73" y1="685.65" x2="562.73" y2="678.23" stroke="#000" stroke-width="1.6" /><circle cx="562.73" cy="678.23" r="3.1" fill="#000"/><line x1="572.84" y1="685.65" x2="572.84" y2="702.98" stroke="#000" stroke-width="1.6" /><circle cx="572.84" cy="702.98" r="3.1" fill="#000"/><line x1="582.94" y1="685.65" x2="582.94" y2="649.76" stroke="#000" stroke-width="1.6" /><circle cx="582.94" cy="649.76" r="3.1" fill="#000"/><line x1="593.05" y1="685.65" x2="593.05" y2="700.09" stroke="#000" stroke-width="1.6" /><circle cx="593.05" cy="700.09" r="3.1" fill="#000"/><line x1="603.15" y1="685.65" x2="603.15" y2="687.71" stroke="#000" stroke-width="1.6" /><circle cx="603.15" cy="687.71" r="3.1" fill="#000"/><line x1="613.25" y1="685.65" x2="613.25" y2="688.12" stroke="#000" stroke-width="1.6" /><circle cx="613.25" cy="688.12" r="3.1" fill="#000"/><line x1="623.36" y1="685.65" x2="623.36" y2="671.21" stroke="#000" stroke-width="1.6" /><circle cx="623.36" cy="671.21" r="3.1" fill="#000"/><line x1="633.47" y1="685.65" x2="633.47" y2="662.14" stroke="#000" stroke-width="1.6" /><circle cx="633.47" cy="662.14" r="3.1" fill="#000"/><line x1="643.57" y1="685.65" x2="643.57" y2="696.79" stroke="#000" stroke-width="1.6" /><circle cx="643.57" cy="696.79" r="3.1" fill="#000"/><line x1="653.67" y1="685.65" x2="653.67" y2="676.99" stroke="#000" stroke-width="1.6" /><circle cx="653.67" cy="676.99" r="3.1" fill="#000"/><line x1="663.78" y1="685.65" x2="663.78" y2="695.96" stroke="#000" stroke-width="1.6" /><circle cx="663.78" cy="695.96" r="3.1" fill="#000"/><line x1="673.88" y1="685.65" x2="673.88" y2="699.26" stroke="#000" stroke-width="1.6" /><circle cx="673.88" cy="699.26" r="3.1" fill="#000"/><line x1="683.99" y1="685.65" x2="683.99" y2="682.35" stroke="#000" stroke-width="1.6" /><circle cx="683.99" cy="682.35" r="3.1" fill="#000"/><line x1="694.10" y1="685.65" x2="694.10" y2="686.06" stroke="#000" stroke-width="1.6" /><circle cx="694.10" cy="686.06" r="3.1" fill="#000"/><line x1="704.20" y1="685.65" x2="704.20" y2="707.10" stroke="#000" stroke-width="1.6" /><circle cx="704.20" cy="707.10" r="3.1" fill="#000"/><line x1="714.31" y1="685.65" x2="714.31" y2="669.56" stroke="#000" stroke-width="1.6" /><circle cx="714.31" cy="669.56" r="3.1" fill="#000"/><line x1="724.41" y1="685.65" x2="724.41" y2="666.67" stroke="#000" stroke-width="1.6" /><circle cx="724.41" cy="666.67" r="3.1" fill="#000"/><line x1="734.51" y1="685.65" x2="734.51" y2="681.94" stroke="#000" stroke-width="1.6" /><circle cx="734.51" cy="681.94" r="3.1" fill="#000"/><line x1="744.62" y1="685.65" x2="744.62" y2="676.16" stroke="#000" stroke-width="1.6" /><circle cx="744.62" cy="676.16" r="3.1" fill="#000"/><line x1="754.72" y1="685.65" x2="754.72" y2="691.01" stroke="#000" stroke-width="1.6" /><circle cx="754.72" cy="691.01" r="3.1" fill="#000"/><line x1="764.83" y1="685.65" x2="764.83" y2="688.95" stroke="#000" stroke-width="1.6" /><circle cx="764.83" cy="688.95" r="3.1" fill="#000"/><line x1="774.93" y1="685.65" x2="774.93" y2="665.85" stroke="#000" stroke-width="1.6" /><circle cx="774.93" cy="665.85" r="3.1" fill="#000"/><line x1="785.04" y1="685.65" x2="785.04" y2="668.74" stroke="#000" stroke-width="1.6" /><circle cx="785.04" cy="668.74" r="3.1" fill="#000"/><line x1="795.14" y1="685.65" x2="795.14" y2="673.69" stroke="#000" stroke-width="1.6" /><circle cx="795.14" cy="673.69" r="3.1" fill="#000"/><line x1="805.25" y1="685.65" x2="805.25" y2="661.73" stroke="#000" stroke-width="1.6" /><circle cx="805.25" cy="661.73" r="3.1" fill="#000"/><line x1="815.36" y1="685.65" x2="815.36" y2="682.76" stroke="#000" stroke-width="1.6" /><circle cx="815.36" cy="682.76" r="3.1" fill="#000"/><line x1="825.46" y1="685.65" x2="825.46" y2="689.36" stroke="#000" stroke-width="1.6" /><circle cx="825.46" cy="689.36" r="3.1" fill="#000"/><line x1="835.56" y1="685.65" x2="835.56" y2="688.95" stroke="#000" stroke-width="1.6" /><circle cx="835.56" cy="688.95" r="3.1" fill="#000"/><line x1="845.67" y1="685.65" x2="845.67" y2="688.12" stroke="#000" stroke-width="1.6" /><circle cx="845.67" cy="688.12" r="3.1" fill="#000"/><line x1="855.77" y1="685.65" x2="855.77" y2="714.11" stroke="#000" stroke-width="1.6" /><circle cx="855.77" cy="714.11" r="3.1" fill="#000"/><line x1="865.88" y1="685.65" x2="865.88" y2="693.07" stroke="#000" stroke-width="1.6" /><circle cx="865.88" cy="693.07" r="3.1" fill="#000"/><line x1="875.98" y1="685.65" x2="875.98" y2="727.31" stroke="#000" stroke-width="1.6" /><circle cx="875.98" cy="727.31" r="3.1" fill="#000"/><line x1="886.09" y1="685.65" x2="886.09" y2="662.96" stroke="#000" stroke-width="1.6" /><circle cx="886.09" cy="662.96" r="3.1" fill="#000"/><line x1="896.19" y1="685.65" x2="896.19" y2="673.69" stroke="#000" stroke-width="1.6" /><circle cx="896.19" cy="673.69" r="3.1" fill="#000"/><line x1="906.30" y1="685.65" x2="906.30" y2="668.74" stroke="#000" stroke-width="1.6" /><circle cx="906.30" cy="668.74" r="3.1" fill="#000"/><line x1="502.10" y1="685.65" x2="906.30" y2="685.65" stroke="#000" stroke-width="1.8" /><rect x="502.1" y="644.4" width="404.2" height="82.5" fill="none" stroke="#000" stroke-width="1.6"/><line x1="502.10" y1="726.90" x2="502.10" y2="718.90" stroke="#000" stroke-width="1.5" /><line x1="603.15" y1="726.90" x2="603.15" y2="718.90" stroke="#000" stroke-width="1.5" /><line x1="704.20" y1="726.90" x2="704.20" y2="718.90" stroke="#000" stroke-width="1.5" /><line x1="805.25" y1="726.90" x2="805.25" y2="718.90" stroke="#000" stroke-width="1.5" /><line x1="906.30" y1="726.90" x2="906.30" y2="718.90" stroke="#000" stroke-width="1.5" /><line x1="552.62" y1="726.90" x2="552.62" y2="722.90" stroke="#000" stroke-width="1.5" /><line x1="653.67" y1="726.90" x2="653.67" y2="722.90" stroke="#000" stroke-width="1.5" /><line x1="754.72" y1="726.90" x2="754.72" y2="722.90" stroke="#000" stroke-width="1.5" /><line x1="855.77" y1="726.90" x2="855.77" y2="722.90" stroke="#000" stroke-width="1.5" /><line x1="502.10" y1="726.90" x2="510.10" y2="726.90" stroke="#000" stroke-width="1.5" /><line x1="502.10" y1="685.65" x2="510.10" y2="685.65" stroke="#000" stroke-width="1.5" /><line x1="502.10" y1="644.40" x2="510.10" y2="644.40" stroke="#000" stroke-width="1.5" /><line x1="502.10" y1="706.27" x2="506.10" y2="706.27" stroke="#000" stroke-width="1.5" /><line x1="502.10" y1="665.02" x2="506.10" y2="665.02" stroke="#000" stroke-width="1.5" /><line x1="502.10" y1="644.40" x2="502.10" y2="652.40" stroke="#000" stroke-width="1.5" /><line x1="582.94" y1="644.40" x2="582.94" y2="652.40" stroke="#000" stroke-width="1.5" /><line x1="663.78" y1="644.40" x2="663.78" y2="652.40" stroke="#000" stroke-width="1.5" /><line x1="744.62" y1="644.40" x2="744.62" y2="652.40" stroke="#000" stroke-width="1.5" /><line x1="825.46" y1="644.40" x2="825.46" y2="652.40" stroke="#000" stroke-width="1.5" /><line x1="906.30" y1="644.40" x2="906.30" y2="652.40" stroke="#000" stroke-width="1.5" /><line x1="542.50" y1="644.40" x2="542.50" y2="648.40" stroke="#000" stroke-width="1.5" /><line x1="623.34" y1="644.40" x2="623.34" y2="648.40" stroke="#000" stroke-width="1.5" /><line x1="704.18" y1="644.40" x2="704.18" y2="648.40" stroke="#000" stroke-width="1.5" /><line x1="785.02" y1="644.40" x2="785.02" y2="648.40" stroke="#000" stroke-width="1.5" /><line x1="865.86" y1="644.40" x2="865.86" y2="648.40" stroke="#000" stroke-width="1.5" /><line x1="906.30" y1="644.40" x2="898.30" y2="644.40" stroke="#000" stroke-width="1.3" /><line x1="906.30" y1="652.65" x2="902.30" y2="652.65" stroke="#000" stroke-width="1.3" /><line x1="906.30" y1="660.90" x2="898.30" y2="660.90" stroke="#000" stroke-width="1.3" /><line x1="906.30" y1="669.15" x2="902.30" y2="669.15" stroke="#000" stroke-width="1.3" /><line x1="906.30" y1="677.40" x2="898.30" y2="677.40" stroke="#000" stroke-width="1.3" /><line x1="906.30" y1="685.65" x2="902.30" y2="685.65" stroke="#000" stroke-width="1.3" /><line x1="906.30" y1="693.90" x2="898.30" y2="693.90" stroke="#000" stroke-width="1.3" /><line x1="906.30" y1="702.15" x2="902.30" y2="702.15" stroke="#000" stroke-width="1.3" /><line x1="906.30" y1="710.40" x2="898.30" y2="710.40" stroke="#000" stroke-width="1.3" /><line x1="906.30" y1="718.65" x2="902.30" y2="718.65" stroke="#000" stroke-width="1.3" /><line x1="906.30" y1="726.90" x2="898.30" y2="726.90" stroke="#000" stroke-width="1.3" /><text x="497.00" y="650.60" font-size="12.5" text-anchor="end" fill="#000" >0.01</text><text x="497.00" y="691.85" font-size="12.5" text-anchor="end" fill="#000" >0.00</text><text x="497.00" y="733.10" font-size="12.5" text-anchor="end" fill="#000" >-0.01</text><text x="502.10" y="746.50" font-size="12" text-anchor="middle" fill="#000" >0.0</text><text x="603.15" y="746.50" font-size="12" text-anchor="middle" fill="#000" >10.0</text><text x="704.20" y="746.50" font-size="12" text-anchor="middle" fill="#000" >20.0</text><text x="805.25" y="746.50" font-size="12" text-anchor="middle" fill="#000" >30.0</text><text x="906.30" y="746.50" font-size="12" text-anchor="middle" fill="#000" >40.0</text><text x="700.50" y="762.50" font-size="12.5" text-anchor="middle" fill="#000" >x</text><text x="0" y="0" font-size="12.5" text-anchor="middle" transform="translate(462.5,687) rotate(90)">y</text></svg>
<div class="a" style="left:1050px;top:102px;width:454px;height:704px;background:#f2f3f4;box-sizing:border-box;border:1px solid #d3d5d7;"></div>
<div class="a" style="left:1051px;top:103px;width:452px;height:28px;background:#f2f3f4;"></div>
<div class="a" style="left:1051px;top:131px;width:452px;height:1px;background:#d5d7d9;"></div>
<div class="t" style="top:109.00px;font-size:15px;color:#232627;left:1053.5px;">Fit</div>
<svg class="a" style="left:1456px;top:109px;" width="14" height="14" viewBox="0 0 14 14"><path d="M7 0.8 L13.2 7 L7 13.2 L0.8 7 Z" fill="none" stroke="#31363b" stroke-width="1.2"/></svg>
<svg class="a" style="left:1478px;top:105px;" width="22.4" height="22.4" viewBox="0 0 22.4 22.4"><circle cx="11.2" cy="11.2" r="11.2" fill="#8b8f93"/><path d="M6.159999999999999 6.159999999999999 L16.24 16.24 M16.24 6.159999999999999 L6.159999999999999 16.24" stroke="#fcfcfc" stroke-width="1.4"/></svg>
<div class="a" style="left:1054.5px;top:158.5px;width:444px;height:615px;background:#f2f3f4;box-sizing:border-box;border:1px solid #cdd0d2;"></div>
<div class="a" style="left:1116.5px;top:136.5px;width:38.59999999999991px;height:22.5px;background:#d3d4d6;box-sizing:border-box;border:1px solid #c2c4c6;"></div>
<div class="t" style="top:139.80px;font-size:15px;color:#232627;left:1121px;">Line</div>
<div class="a" style="left:1154.6px;top:136.5px;width:58.30000000000018px;height:22.5px;background:#d3d4d6;box-sizing:border-box;border:1px solid #c2c4c6;"></div>
<div class="t" style="top:139.80px;font-size:15px;color:#232627;left:1157.8px;">Symbol</div>
<div class="a" style="left:1212.4px;top:136.5px;width:53.399999999999864px;height:22.5px;background:#d3d4d6;box-sizing:border-box;border:1px solid #c2c4c6;"></div>
<div class="t" style="top:139.80px;font-size:15px;color:#232627;left:1216px;">Values</div>
<div class="a" style="left:1265.3px;top:136.5px;width:48.100000000000136px;height:22.5px;background:#d3d4d6;box-sizing:border-box;border:1px solid #c2c4c6;"></div>
<div class="t" style="top:139.80px;font-size:15px;color:#232627;left:1268.8px;">Filling</div>
<div class="a" style="left:1054.5px;top:136px;width:61.5px;height:23.5px;background:#f2f3f4;box-sizing:border-box;border:1px solid #cdd0d2;border-bottom:none;"></div>
<div class="t" style="top:139.80px;font-size:15px;color:#232627;left:1058.9px;">General</div>
<div class="a" style="left:1142.8px;top:161.7px;width:352.9000000000001px;height:24.400000000000006px;background:#fcfcfc;box-sizing:border-box;border:1px solid #c9cbcd;border-radius:2px;"></div>
<div class="t" style="top:166.30px;font-size:15px;color:#232627;left:1057.7px;">Name</div>
<div class="t" style="top:166.30px;font-size:15px;color:#232627;left:1147px;">fit</div>
<div class="a" style="left:1142.8px;top:188.5px;width:352.9000000000001px;height:24.80000000000001px;background:#fcfcfc;box-sizing:border-box;border:1px solid #c9cbcd;border-radius:2px;"></div>
<div class="t" style="top:193.50px;font-size:15px;color:#232627;left:1057.7px;">Comment</div>
<div class="t" style="top:222.80px;font-size:15px;color:#232627;font-weight:bold;left:1058px;">Data:</div>
<div class="a" style="left:1142.4px;top:241.4px;width:353.29999999999995px;height:25.299999999999983px;background:linear-gradient(#f0f1f2,#e4e5e7);box-sizing:border-box;border:1px solid #c4c6c8;border-radius:2px;"></div>
<svg class="a" style="left:1487px;top:253px;" width="5" height="3.5" viewBox="0 0 5 3.5"><path d="M0.5 0.5 L2.5 2.5 L4.5 0.5" fill="none" stroke="#555" stroke-width="0.9"/></svg>
<div class="t" style="top:246.40px;font-size:15px;color:#232627;left:1057.7px;">x-Data</div>
<div class="t" style="top:246.40px;font-size:15px;color:#232627;left:1146.2px;">x</div>
<div class="a" style="left:1142.4px;top:269px;width:353.29999999999995px;height:24.399999999999977px;background:linear-gradient(#f0f1f2,#e4e5e7);box-sizing:border-box;border:1px solid #c4c6c8;border-radius:2px;"></div>
<svg class="a" style="left:1487px;top:280px;" width="5" height="3.5" viewBox="0 0 5 3.5"><path d="M0.5 0.5 L2.5 2.5 L4.5 0.5" fill="none" stroke="#555" stroke-width="0.9"/></svg>
<div class="t" style="top:273.60px;font-size:15px;color:#232627;left:1057.7px;">y-Data</div>
<div class="t" style="top:273.60px;font-size:15px;color:#232627;left:1146.2px;">y_meas</div>
<div class="a" style="left:1142.4px;top:295.7px;width:353.29999999999995px;height:24.900000000000034px;background:linear-gradient(#f0f1f2,#e4e5e7);box-sizing:border-box;border:1px solid #c4c6c8;border-radius:2px;"></div>
<svg class="a" style="left:1487px;top:307px;" width="5" height="3.5" viewBox="0 0 5 3.5"><path d="M0.5 0.5 L2.5 2.5 L4.5 0.5" fill="none" stroke="#555" stroke-width="0.9"/></svg>
<div class="t" style="top:300.80px;font-size:15px;color:#232627;left:1057.7px;">Weights</div>
<div class="t" style="top:325.60px;font-size:15px;color:#232627;left:1057.7px;">x-Range</div>
<div class="a" style="left:1143px;top:329.5px;width:8px;height:8px;background:#fcfcfc;box-sizing:border-box;border:1px solid #9fd3f0;"></div>
<div class="a" style="left:1145px;top:331.5px;width:4px;height:4px;background:#3daee9;"></div>
<div class="t" style="top:325.60px;font-size:15px;color:#232627;left:1153.7px;">Auto</div>
<div class="t" style="top:350.40px;font-size:15px;color:#a1a5a8;left:1142.4px;">Min</div>
<div class="a" style="left:1170.3px;top:345.4px;width:325.4000000000001px;height:24.600000000000023px;background:#ebeced;box-sizing:border-box;border:1px solid #d3d5d7;border-radius:2px;"></div>
<svg class="a" style="left:1487px;top:354px;" width="5" height="8" viewBox="0 0 5 8"><path d="M0.5 2.5 L2.5 0.5 L4.5 2.5 M0.5 5.5 L2.5 7.5 L4.5 5.5" fill="none" stroke="#999" stroke-width="0.9"/></svg>
<div class="t" style="top:350.40px;font-size:15px;color:#a1a5a8;left:1174px;">0,000000</div>
<div class="t" style="top:377.60px;font-size:15px;color:#a1a5a8;left:1142.4px;">Max</div>
<div class="a" style="left:1172.7px;top:372.6px;width:323.0px;height:24.399999999999977px;background:#ebeced;box-sizing:border-box;border:1px solid #d3d5d7;border-radius:2px;"></div>
<svg class="a" style="left:1487px;top:381px;" width="5" height="8" viewBox="0 0 5 8"><path d="M0.5 2.5 L2.5 0.5 L4.5 2.5 M0.5 5.5 L2.5 7.5 L4.5 5.5" fill="none" stroke="#999" stroke-width="0.9"/></svg>
<div class="t" style="top:377.60px;font-size:15px;color:#a1a5a8;left:1176.5px;">99,000000</div>
<div class="t" style="top:408.10px;font-size:15px;color:#232627;font-weight:bold;left:1058px;">Fit:</div>
<div class="a" style="left:1142.4px;top:426.5px;width:353.29999999999995px;height:25.0px;background:linear-gradient(#f0f1f2,#e4e5e7);box-sizing:border-box;border:1px solid #c4c6c8;border-radius:2px;"></div>
<svg class="a" style="left:1487px;top:438px;" width="5" height="3.5" viewBox="0 0 5 3.5"><path d="M0.5 0.5 L2.5 2.5 L4.5 0.5" fill="none" stroke="#555" stroke-width="0.9"/></svg>
<div class="t" style="top:432.20px;font-size:15px;color:#232627;left:1057.7px;">Model</div>
<div class="t" style="top:432.20px;font-size:15px;color:#232627;left:1146.2px;">Maxwell-Boltzmann</div>
<div class="a" style="left:1142.4px;top:454.4px;width:353.29999999999995px;height:52.0px;background:#fcfcfc;box-sizing:border-box;border:1px solid #c9cbcd;border-radius:2px;"></div>
<div class="t" style="top:472.90px;font-size:15px;color:#232627;left:1057.7px;">f(x)</div>
<div class="t" style="top:458.70px;font-size:15px;color:#232627;left:1145.5px;"><span style="letter-spacing:0.3px"><b style="color:#5a1010">sqrt</b>(2/<b style="color:#5a1010">pi</b>)*<span style="color:#1f7a1f">x</span>^2*<b style="color:#5a1010">exp</b>(-<span style="color:#1f7a1f">x</span>^2/(2*<span style="color:#1f7a1f">a</span>^2))/<span style="color:#1f7a1f">a</span>^3</span></div>
<div class="a" style="left:1345.4px;top:510.6px;width:85.8px;height:25.4px;background:linear-gradient(#f0f1f2,#e4e5e7);box-sizing:border-box;border:1px solid #c4c6c8;border-radius:2px;"></div>
<div class="t" style="top:515.70px;font-size:15px;color:#232627;left:1349px;">Parameters</div>
<div class="a" style="left:1435.2px;top:510.6px;width:60.5px;height:25.4px;background:linear-gradient(#f0f1f2,#e4e5e7);box-sizing:border-box;border:1px solid #c4c6c8;border-radius:2px;"></div>
<div class="t" style="top:515.70px;font-size:15px;color:#232627;left:1438.6px;">Options</div>
<div class="t" style="top:546.20px;font-size:15px;color:#232627;font-weight:bold;left:1057.7px;">Results:</div>
<div class="a" style="left:1142.4px;top:544.2px;width:353.3px;height:161px;background:#fcfcfc;box-sizing:border-box;border:1px solid #3daee9;border-radius:2px;"></div>
<div class="a" style="left:0;top:0;width:1504px;height:846px;clip-path:inset(545px 8px 141px 1143px);">
<div class="t" style="top:550.40px;font-size:15px;color:#232627;left:1145px;"><b>Parameters:</b></div>
<div class="t" style="top:569.80px;font-size:15px;color:#232627;left:1145px;">a = 13.1565±2.0508</div>
<div class="t" style="top:609.60px;font-size:15px;color:#232627;left:1145px;"><b>Goodness of fit:</b></div>
<div class="t" style="top:629.10px;font-size:15px;color:#232627;left:1145px;">sum of squared errors (χ²): 0.00214907</div>
<div class="t" style="top:648.80px;font-size:15px;color:#232627;left:1145px;">mean squared error: 2.14907e-05</div>
<div class="t" style="top:668.20px;font-size:15px;color:#232627;left:1145px;">root-mean squared error (reduced χ²): 0.0046358</div>
<div class="t" style="top:687.80px;font-size:15px;color:#232627;left:1145px;">mean absolute error: 0.363451</div>
</div>
<div class="a" style="left:1489px;top:554.5px;width:4px;height:141px;background:#b9bbbd;border-radius:2px;"></div>
<div class="a" style="left:1489px;top:592.7px;width:4px;height:63px;background:#3daee9;border-radius:2px;"></div>
<svg class="a" style="left:1488px;top:547px;" width="6" height="4" viewBox="0 0 6 4"><path d="M0.5 3.5 L3 1 L5.5 3.5" fill="none" stroke="#666" stroke-width="0.9"/></svg>
<svg class="a" style="left:1488px;top:700px;" width="6" height="4" viewBox="0 0 6 4"><path d="M0.5 0.5 L3 3 L5.5 0.5" fill="none" stroke="#666" stroke-width="0.9"/></svg>
<div class="a" style="left:1057px;top:707.5px;width:439px;height:1px;background:#d9dbdd;"></div>
<div class="a" style="left:1385.3px;top:710.6px;width:110.7px;height:29px;background:#e2e3e5;box-sizing:border-box;border:1px solid #d5d7d9;border-radius:2px;"></div>
<svg class="a" style="left:1393px;top:718px;" width="15" height="15" viewBox="0 0 15 15"><circle cx="7.5" cy="7.5" r="5.8" fill="none" stroke="#9a9da0" stroke-width="1.3" stroke-dasharray="2.2 1.3"/><path d="M6 5 L10 7.5 L6 10 Z" fill="#9a9da0"/></svg>
<div class="t" style="top:717.40px;font-size:15px;color:#a1a5a8;left:1414.7px;">Recalculate</div>
<div class="a" style="left:1058.3px;top:757.5px;width:7.5px;height:7.5px;background:#fcfcfc;box-sizing:border-box;border:1px solid #9fd3f0;"></div>
<div class="a" style="left:1060.2px;top:759.4px;width:3.8px;height:3.8px;background:#3daee9;"></div>
<div class="t" style="top:753.30px;font-size:15px;color:#232627;left:1068.6px;">visible</div>
<div class="a" style="left:1424.9px;top:778px;width:21.3px;height:21.5px;background:#e2e3e5;box-sizing:border-box;border:1px solid #d5d7d9;border-radius:2px;"></div>
<svg class="a" style="left:1430px;top:784px;" width="11" height="10" viewBox="0 0 11 10"><path d="M0.5 9.5 V0.5 H4 L5 2 H10.5 V9.5 Z" fill="#f4f4f4" stroke="#999" stroke-width="1"/><rect x="0" y="0" width="4.5" height="3" fill="#999"/></svg>
<div class="a" style="left:1447.7px;top:778px;width:21px;height:21.5px;background:linear-gradient(#f0f1f2,#e4e5e7);box-sizing:border-box;border:1px solid #c4c6c8;border-radius:2px;"></div>
<svg class="a" style="left:1452px;top:784px;" width="11" height="11" viewBox="0 0 11 11"><path d="M0.5 0.5 H8.5 L10.5 2.5 V10.5 H0.5 Z" fill="#fcfcfc" stroke="#31363b" stroke-width="1"/><rect x="3" y="0.5" width="4.5" height="3.5" fill="none" stroke="#31363b" stroke-width="0.9"/><rect x="2.5" y="6.5" width="6" height="4" fill="none" stroke="#31363b" stroke-width="0.9"/></svg>
<div class="a" style="left:1470px;top:778px;width:21.7px;height:21.5px;background:linear-gradient(#f0f1f2,#e4e5e7);box-sizing:border-box;border:1px solid #c4c6c8;border-radius:2px;"></div>
<svg class="a" style="left:1476px;top:784px;" width="11" height="11" viewBox="0 0 11 11"><path d="M0.5 0.5 H8.5 L10.5 2.5 V6 M0.5 0.5 V10.5 H5" fill="#fcfcfc" stroke="#31363b" stroke-width="1"/><rect x="3" y="0.5" width="4.5" height="3.5" fill="none" stroke="#31363b" stroke-width="0.9"/><path d="M6 10.5 L10.5 6" stroke="#31363b" stroke-width="1.5"/></svg>
</body></html>
